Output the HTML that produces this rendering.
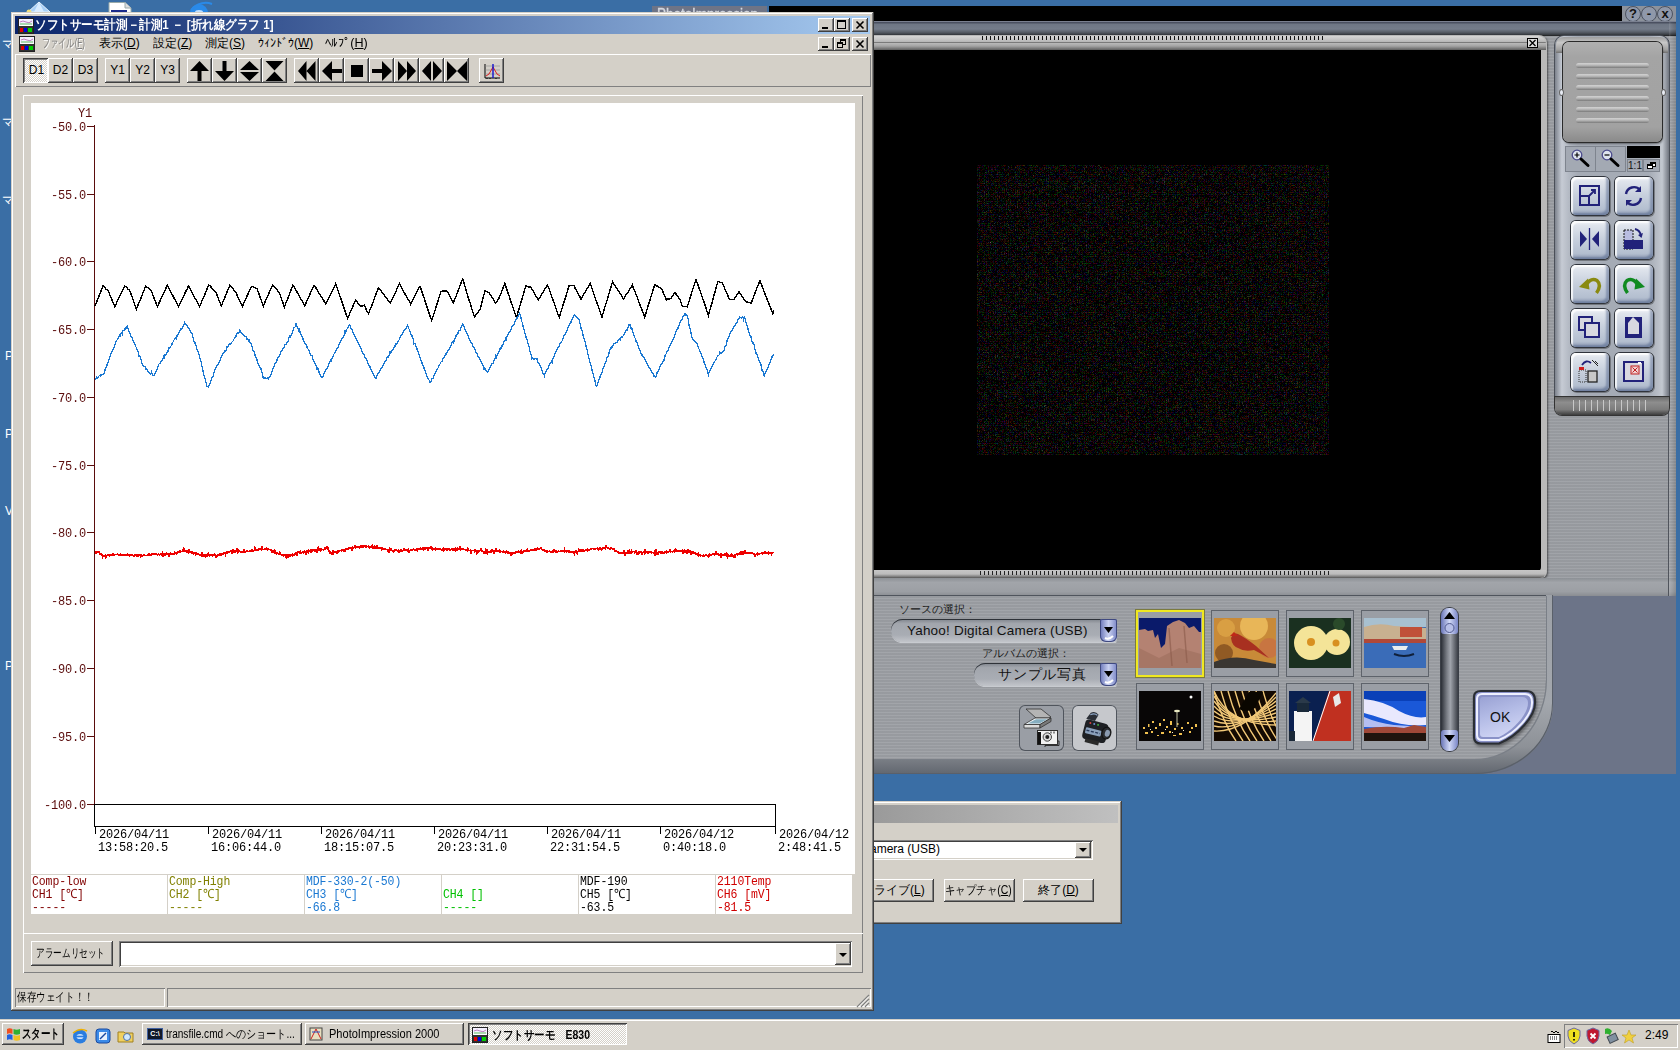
<!DOCTYPE html>
<html><head><meta charset="utf-8">
<style>
*{box-sizing:border-box;margin:0;padding:0}
html,body{width:1680px;height:1050px;overflow:hidden}
body{position:relative;background:#3A6EA5;font-family:"Liberation Sans",sans-serif;font-size:12px;color:#000}
.a{position:absolute}
.mono{font-family:"Liberation Mono",monospace}
/* classic 3D */
.raised{background:#D4D0C8;box-shadow:inset -1px -1px #404040,inset 1px 1px #D4D0C8,inset -2px -2px #808080,inset 2px 2px #FFFFFF}
.btn{background:#D4D0C8;box-shadow:inset -1px -1px #404040,inset 1px 1px #FFFFFF,inset -2px -2px #808080}
.sunken{box-shadow:inset 1px 1px #808080,inset -1px -1px #FFFFFF,inset 2px 2px #404040,inset -2px -2px #D4D0C8}
.thin-sunken{box-shadow:inset 1px 1px #808080,inset -1px -1px #FFFFFF}
.thin-raised{box-shadow:inset 1px 1px #FFFFFF,inset -1px -1px #808080}
.ax{font-size:12px;line-height:14px;white-space:nowrap;letter-spacing:-0.2px;transform:scaleY(1.12);transform-origin:0 50%}
.lg{font-size:11.5px;line-height:13px;white-space:nowrap;letter-spacing:-0.1px;transform:scaleY(1.1);transform-origin:0 50%}
.pic{width:16px;height:16px;border-radius:50%;background:#8f98aa;border:1px solid #4c5260;text-align:center;line-height:14px;font-size:13px;font-weight:bold;color:#111}
.etched{box-shadow:inset 1px 1px #808080,inset -1px -1px #FFFFFF,1px 1px #FFFFFF}
</style></head>
<body>

<!-- ========== Desktop fragments ========== -->
<div id="desk">
<svg class="a" style="left:24px;top:0" width="30" height="14"><path d="M15 2 L26 12 H4 Z" fill="#a8d0f8" stroke="#e8f4ff"/><path d="M15 2 L20 12 H10 Z" fill="#d8ecff"/><circle cx="5" cy="12" r="2.5" fill="#f0e080"/></svg>
<svg class="a" style="left:106px;top:0" width="30" height="14"><path d="M3 2.5 H19 L25 8 V14 H3 Z" fill="#fff" stroke="#9aa"/><path d="M19 2.5 V8 H25" fill="#ddd" stroke="#9aa"/><rect x="5" y="10" width="16" height="3" fill="#1a2a8a"/></svg>
<svg class="a" style="left:185px;top:0" width="32" height="14"><circle cx="14" cy="13" r="9" fill="#2a8ae8"/><path d="M6 10 Q16 0 27 4" stroke="#2a8ae8" stroke-width="2" fill="none"/><ellipse cx="14" cy="12" rx="4" ry="2" fill="#bfe0ff"/></svg>
<div class="a" style="left:2px;top:37px;color:#fff;font-size:12px;line-height:14px">マ</div>
<div class="a" style="left:2px;top:115px;color:#fff;font-size:12px;line-height:14px">マ</div>
<div class="a" style="left:2px;top:193px;color:#fff;font-size:12px;line-height:14px">マ</div>
<div class="a" style="left:5px;top:349px;color:#fff;font-size:12px;line-height:14px">P</div>
<div class="a" style="left:5px;top:427px;color:#fff;font-size:12px;line-height:14px">P</div>
<div class="a" style="left:5px;top:504px;color:#fff;font-size:12px;line-height:14px">V</div>
<div class="a" style="left:5px;top:659px;color:#fff;font-size:12px;line-height:14px">P</div>
</div>

<!-- ========== PhotoImpression window ========== -->
<div class="a" style="left:652px;top:6px;width:115px;height:10px;background:#6e7486;overflow:hidden"><div class="a" style="left:5px;top:1px;font-size:16px;color:#d4d8e0;white-space:nowrap;line-height:16px;transform:scaleX(0.84);transform-origin:0 0;-webkit-text-stroke:0.4px #d4d8e0">PhotoImpression</div></div>
<div class="a" style="left:650px;top:22px;width:1026px;height:574px;background:#9c9fa4;background-image:repeating-linear-gradient(180deg,rgba(255,255,255,0.05) 0 1px,rgba(0,0,0,0.035) 1px 3px)"></div>
<div class="a" style="left:769px;top:6px;width:853px;height:16px;background:#000;box-shadow:1px 1px #555"></div>
<div class="a" style="left:1622px;top:6px;width:54px;height:16px;background:#8c929c"></div>
<!-- title circle buttons -->
<div class="a pic" style="left:1625px;top:6px">?</div>
<div class="a pic" style="left:1641px;top:6px">-</div>
<div class="a pic" style="left:1657px;top:6px">x</div>
<!-- top strip -->
<div class="a" style="left:650px;top:21px;width:1026px;height:15px;background:linear-gradient(180deg,#7a8090 0,#7a8090 1px,#4a5060 1px,#4a5060 2px,#6e7684 3px,#747c8a 8px,#5a606a 11px,#33373c 14px,#1a1a1a 15px)"></div>
<!-- preview frame -->
<div class="a" style="left:650px;top:35px;width:897px;height:543px;background:#b9b9b9;border-radius:0 8px 6px 0;box-shadow:1px 1px 2px rgba(0,0,0,0.5)"></div>
<div class="a" style="left:650px;top:36px;width:896px;height:14px;background:linear-gradient(180deg,#d6d6d6 0,#c2c2c2 4px,#b4b4b4 6px,#7a7a7a 6px,#7a7a7a 7px,#bababa 7px,#a4a4a4 10px,#5e5e5e 14px);border-radius:0 8px 0 0"></div>
<div class="a" style="left:982px;top:36px;width:344px;height:4px;background:repeating-linear-gradient(90deg,#111 0 1.2px,transparent 1.2px 4px)"></div>
<div class="a" style="left:1527px;top:38px;width:11px;height:10px;border:1px solid #000;background:#ddd"><svg class="a" style="left:0;top:0" width="9" height="8"><path d="M1.5 1 L7.5 7 M7.5 1 L1.5 7" stroke="#000" stroke-width="1.3"/></svg></div>
<div class="a" style="left:650px;top:50px;width:891px;height:521px;background:#000;border-radius:0 0 4px 0"></div>
<div class="a" style="left:650px;top:570px;width:896px;height:8px;background:linear-gradient(180deg,#c6c6c6 0,#bcbcbc 50%,#7a7a7a 85%,#555 100%);border-radius:0 0 6px 0"></div>
<div class="a" style="left:980px;top:571px;width:349px;height:4px;background:repeating-linear-gradient(90deg,#222 0 1px,transparent 1px 4px)"></div>
<svg class="a" style="left:977px;top:165px" width="352" height="290"><filter id="nz" x="0" y="0" width="100%" height="100%"><feTurbulence type="turbulence" baseFrequency="0.55" numOctaves="1" seed="11"/><feColorMatrix values="0.16 0 0 0 -0.035  0 0.15 0 0 -0.035  0 0 0.15 0 -0.035  0 0 0 0 1"/></filter><rect width="352" height="290" fill="#000"/><rect width="352" height="290" filter="url(#nz)"/></svg>
<!-- gap strip -->
<div class="a" style="left:650px;top:578px;width:1026px;height:18px;background:linear-gradient(180deg,#8c9095 0,#a2a5aa 25%,#9c9fa4 75%,#8a8d92 100%)"></div>
<!-- right edge column -->
<div class="a" style="left:1668px;top:40px;width:1px;height:556px;background:#50545c"></div><div class="a" style="left:1669px;top:22px;width:7px;height:574px;background:linear-gradient(90deg,rgba(255,255,255,0.12),rgba(255,255,255,0) 40%,rgba(0,0,0,0.12))"></div>
<!-- right panel -->
<div class="a" style="left:1555px;top:36px;width:114px;height:368px;background:linear-gradient(90deg,#7d838d 0,#c6cbd4 6%,#b4bac4 12%,#a5abb5 20%,#a5abb5 82%,#b8bdc6 90%,#c3c8d0 94%,#70757f 100%);border-radius:9px 9px 0 0;box-shadow:0 0 0 1px #4a4f58"></div>
<div class="a" style="left:1556px;top:37px;width:112px;height:16px;background:linear-gradient(180deg,#9d9d9d 0,#c8c8c8 35%,#a0a0a0 80%,#707070 100%);border-radius:8px 8px 0 0"></div>
<div class="a" style="left:1563px;top:42px;width:99px;height:100px;background:linear-gradient(180deg,#b0b0b0 0,#a4a4a4 15%,#a2a2a2 85%,#8a8a8a 100%);border-radius:6px;box-shadow:0 0 0 1px #2a2a2a,1px 2px 2px rgba(0,0,0,0.4)"></div>
<div class="a" style="left:1576px;top:63px;width:73px;height:5px;border-radius:3px;background:linear-gradient(180deg,#d2d2d2 0,#bdbdbd 40%,#7a7a7a 100%)"></div>
<div class="a" style="left:1576px;top:74px;width:73px;height:5px;border-radius:3px;background:linear-gradient(180deg,#d2d2d2 0,#bdbdbd 40%,#7a7a7a 100%)"></div>
<div class="a" style="left:1576px;top:85px;width:73px;height:5px;border-radius:3px;background:linear-gradient(180deg,#d2d2d2 0,#bdbdbd 40%,#7a7a7a 100%)"></div>
<div class="a" style="left:1576px;top:96px;width:73px;height:5px;border-radius:3px;background:linear-gradient(180deg,#d2d2d2 0,#bdbdbd 40%,#7a7a7a 100%)"></div>
<div class="a" style="left:1576px;top:107px;width:73px;height:5px;border-radius:3px;background:linear-gradient(180deg,#d2d2d2 0,#bdbdbd 40%,#7a7a7a 100%)"></div>
<div class="a" style="left:1576px;top:118px;width:73px;height:5px;border-radius:3px;background:linear-gradient(180deg,#d2d2d2 0,#bdbdbd 40%,#7a7a7a 100%)"></div>
<div class="a" style="left:1559px;top:89px;width:5px;height:7px;border-radius:50%;background:#e8ecf4;border:1px solid #666"></div>
<div class="a" style="left:1661px;top:89px;width:5px;height:7px;border-radius:50%;background:#e8ecf4;border:1px solid #666"></div>
<div class="a" style="left:1565px;top:146px;width:61px;height:26px;background:#a3a9b3;box-shadow:inset 0 0 0 1px #7e848e"></div>
<div class="a" style="left:1595px;top:146px;width:1px;height:26px;background:#7e848e"></div>
<svg class="a" style="left:1571px;top:149px" width="22" height="21"><circle cx="6" cy="6" r="4.8" fill="#dde2ee" stroke="#4a4a8c" stroke-width="1.3"/><path d="M3.5 6 H8.5 M6 3.5 V8.5" stroke="#000" stroke-width="1.2"/><path d="M10 10 L17 16.5" stroke="#000" stroke-width="3" stroke-linecap="round"/></svg>
<svg class="a" style="left:1601px;top:149px" width="22" height="21"><circle cx="6" cy="6" r="4.8" fill="#dde2ee" stroke="#4a4a8c" stroke-width="1.3"/><path d="M3.5 6 H8.5" stroke="#000" stroke-width="1.2"/><path d="M10 10 L17 16.5" stroke="#000" stroke-width="3" stroke-linecap="round"/></svg>
<div class="a" style="left:1627px;top:146px;width:33px;height:12px;background:#000"></div>
<div class="a" style="left:1627px;top:159px;width:16px;height:13px;background:#a3a9b3;box-shadow:inset 0 0 0 1px #7e848e;font-size:10px;line-height:13px;text-align:center;color:#111">1:1</div>
<div class="a" style="left:1643px;top:159px;width:17px;height:13px;background:#a3a9b3;box-shadow:inset 0 0 0 1px #7e848e"><div class="a" style="left:7px;top:3px;width:6px;height:5px;border:1px solid #000;border-top-width:2px;background:#fff"></div><div class="a" style="left:4px;top:5px;width:6px;height:5px;border:1px solid #000;border-top-width:2px;background:#fff"></div></div>
<div class="a" style="left:1571px;top:177px;width:38px;height:38px;border-radius:5px;background:linear-gradient(180deg,#f2f4f8 0,#dfe4ec 12%,#c9d1de 45%,#b4bfd0 85%,#8f9cb4 100%);box-shadow:0 0 0 1px #30343c,1px 1px 0 1px rgba(0,0,0,0.3),inset -3px -2px 2px rgba(70,90,130,0.45),inset 2px 2px 1px rgba(255,255,255,0.8)"><svg class="a" style="left:0;top:0" width="38" height="38"><rect x="9" y="9" width="19" height="19" fill="none" stroke="#22227a" stroke-width="2"/><rect x="9" y="19" width="9" height="9" fill="none" stroke="#22227a" stroke-width="2"/><path d="M17 20 L24 13 M20 13 H24 V17" stroke="#22227a" stroke-width="1.8" fill="none"/></svg></div>
<div class="a" style="left:1615px;top:177px;width:38px;height:38px;border-radius:5px;background:linear-gradient(180deg,#f2f4f8 0,#dfe4ec 12%,#c9d1de 45%,#b4bfd0 85%,#8f9cb4 100%);box-shadow:0 0 0 1px #30343c,1px 1px 0 1px rgba(0,0,0,0.3),inset -3px -2px 2px rgba(70,90,130,0.45),inset 2px 2px 1px rgba(255,255,255,0.8)"><svg class="a" style="left:0;top:0" width="38" height="38"><path d="M11 17 A8 8 0 0 1 25 13" stroke="#22227a" stroke-width="2.4" fill="none"/><path d="M26 9 V15 H20 Z" fill="#22227a"/><path d="M26 21 A8 8 0 0 1 12 25" stroke="#22227a" stroke-width="2.4" fill="none"/><path d="M11 29 V23 H17 Z" fill="#22227a"/></svg></div>
<div class="a" style="left:1571px;top:221px;width:38px;height:38px;border-radius:5px;background:linear-gradient(180deg,#f2f4f8 0,#dfe4ec 12%,#c9d1de 45%,#b4bfd0 85%,#8f9cb4 100%);box-shadow:0 0 0 1px #30343c,1px 1px 0 1px rgba(0,0,0,0.3),inset -3px -2px 2px rgba(70,90,130,0.45),inset 2px 2px 1px rgba(255,255,255,0.8)"><svg class="a" style="left:0;top:0" width="38" height="38"><path d="M9 10 L16 18 L9 26 Z M28 10 L21 18 L28 26 Z" fill="#22227a"/><path d="M18.5 7 V29" stroke="#22227a" stroke-width="1.3"/></svg></div>
<div class="a" style="left:1615px;top:221px;width:38px;height:38px;border-radius:5px;background:linear-gradient(180deg,#f2f4f8 0,#dfe4ec 12%,#c9d1de 45%,#b4bfd0 85%,#8f9cb4 100%);box-shadow:0 0 0 1px #30343c,1px 1px 0 1px rgba(0,0,0,0.3),inset -3px -2px 2px rgba(70,90,130,0.45),inset 2px 2px 1px rgba(255,255,255,0.8)"><svg class="a" style="left:0;top:0" width="38" height="38"><rect x="9" y="9" width="9" height="19" fill="#b8bce0" stroke="#111" stroke-dasharray="2 1"/><rect x="9" y="19" width="19" height="9" fill="#22227a"/><path d="M20 8 Q25 9 26 15" stroke="#22227a" stroke-width="2" fill="none"/><path d="M23 14 L26.5 17 L28 12 Z" fill="#22227a"/></svg></div>
<div class="a" style="left:1571px;top:265px;width:38px;height:38px;border-radius:5px;background:linear-gradient(180deg,#f2f4f8 0,#dfe4ec 12%,#c9d1de 45%,#b4bfd0 85%,#8f9cb4 100%);box-shadow:0 0 0 1px #30343c,1px 1px 0 1px rgba(0,0,0,0.3),inset -3px -2px 2px rgba(70,90,130,0.45),inset 2px 2px 1px rgba(255,255,255,0.8)"><svg class="a" style="left:0;top:0" width="38" height="38"><path d="M15 20 Q20 12 26 15.5 Q31 20 25.5 28" stroke="#8a8a10" stroke-width="3.4" fill="none"/><path d="M8 22 L17 13.5 L18.5 24.5 Z" fill="#8a8a10"/></svg></div>
<div class="a" style="left:1615px;top:265px;width:38px;height:38px;border-radius:5px;background:linear-gradient(180deg,#f2f4f8 0,#dfe4ec 12%,#c9d1de 45%,#b4bfd0 85%,#8f9cb4 100%);box-shadow:0 0 0 1px #30343c,1px 1px 0 1px rgba(0,0,0,0.3),inset -3px -2px 2px rgba(70,90,130,0.45),inset 2px 2px 1px rgba(255,255,255,0.8)"><svg class="a" style="left:0;top:0" width="38" height="38"><path d="M23 20 Q18 12 12 15.5 Q7 20 12.5 28" stroke="#108a20" stroke-width="3.4" fill="none"/><path d="M30 22 L21 13.5 L19.5 24.5 Z" fill="#108a20"/></svg></div>
<div class="a" style="left:1571px;top:309px;width:38px;height:38px;border-radius:5px;background:linear-gradient(180deg,#f2f4f8 0,#dfe4ec 12%,#c9d1de 45%,#b4bfd0 85%,#8f9cb4 100%);box-shadow:0 0 0 1px #30343c,1px 1px 0 1px rgba(0,0,0,0.3),inset -3px -2px 2px rgba(70,90,130,0.45),inset 2px 2px 1px rgba(255,255,255,0.8)"><svg class="a" style="left:0;top:0" width="38" height="38"><rect x="8" y="8" width="13" height="13" fill="#d8d8e0" stroke="#22227a" stroke-width="2"/><rect x="14" y="14" width="14" height="14" fill="#d8d8e0" stroke="#22227a" stroke-width="2"/></svg></div>
<div class="a" style="left:1615px;top:309px;width:38px;height:38px;border-radius:5px;background:linear-gradient(180deg,#f2f4f8 0,#dfe4ec 12%,#c9d1de 45%,#b4bfd0 85%,#8f9cb4 100%);box-shadow:0 0 0 1px #30343c,1px 1px 0 1px rgba(0,0,0,0.3),inset -3px -2px 2px rgba(70,90,130,0.45),inset 2px 2px 1px rgba(255,255,255,0.8)"><svg class="a" style="left:0;top:0" width="38" height="38"><rect x="10" y="8" width="17" height="21" fill="#22227a"/><path d="M13 14 L18 8 L24 14 V25 H13 Z" fill="#d8d8e0"/></svg></div>
<div class="a" style="left:1571px;top:353px;width:38px;height:38px;border-radius:5px;background:linear-gradient(180deg,#f2f4f8 0,#dfe4ec 12%,#c9d1de 45%,#b4bfd0 85%,#8f9cb4 100%);box-shadow:0 0 0 1px #30343c,1px 1px 0 1px rgba(0,0,0,0.3),inset -3px -2px 2px rgba(70,90,130,0.45),inset 2px 2px 1px rgba(255,255,255,0.8)"><svg class="a" style="left:0;top:0" width="38" height="38"><path d="M11 12 Q15 6 20 10" stroke="#22227a" stroke-width="1.8" fill="none"/><rect x="8" y="17" width="7" height="12" fill="none" stroke="#333" stroke-dasharray="1 1"/><rect x="8" y="14" width="5" height="3" fill="#d02020"/><rect x="17" y="18" width="9" height="11" fill="#c8c8c8" stroke="#222" stroke-width="1.3"/><path d="M21 7 L27 13 M24 8 L27 11" stroke="#222"/></svg></div>
<div class="a" style="left:1615px;top:353px;width:38px;height:38px;border-radius:5px;background:linear-gradient(180deg,#f2f4f8 0,#dfe4ec 12%,#c9d1de 45%,#b4bfd0 85%,#8f9cb4 100%);box-shadow:0 0 0 1px #30343c,1px 1px 0 1px rgba(0,0,0,0.3),inset -3px -2px 2px rgba(70,90,130,0.45),inset 2px 2px 1px rgba(255,255,255,0.8)"><svg class="a" style="left:0;top:0" width="38" height="38"><rect x="9" y="9" width="19" height="19" fill="#d8d8e0" stroke="#22227a" stroke-width="2"/><rect x="16" y="13" width="8" height="8" fill="#f0d0d0" stroke="#c02020"/><path d="M17.5 14.5 L22.5 19.5 M22.5 14.5 L17.5 19.5" stroke="#c02020"/><rect x="23" y="9" width="3" height="2" fill="#fff"/></svg></div>
<div class="a" style="left:1555px;top:397px;width:114px;height:18px;border-radius:0 0 7px 7px;background:linear-gradient(180deg,#6a6a6a 0,#8e8e8e 30%,#7c7c7c 70%,#3c3c3c 100%);box-shadow:0 0 0 1px #333"></div>
<div class="a" style="left:1573px;top:400px;width:78px;height:11px;background:repeating-linear-gradient(90deg,#c8c8c8 0 1px,transparent 1px 6px)"></div>
<!-- slate -->
<div class="a" style="left:1380px;top:596px;width:296px;height:178px;background:#6c7488"></div>
<!-- bottom panel -->
<div class="a" style="left:650px;top:595px;width:903px;height:179px;background:linear-gradient(180deg,#9da1a7 0,#a3a7ad 60%,#8d9197 85%,#62676f 100%);border-bottom-right-radius:78px 70px;box-shadow:inset -1px -1px #5a606a"></div>
<div class="a" style="left:650px;top:595px;width:896px;height:164px;background:#9da0a5;background-image:repeating-linear-gradient(180deg,rgba(255,255,255,0.05) 0 1px,rgba(0,0,0,0.035) 1px 3px);border-bottom-right-radius:72px 80px;box-shadow:inset 0 1px #50555d,1px 1px #7a7f87"></div>
<div class="a pil" style="left:899px;top:602px;width:80px;overflow:hidden;font-size:11px;color:#1a1a1a;white-space:nowrap;line-height:14px">ソースの選択：</div>
<div class="a" style="left:891px;top:619px;width:226px;height:23px;border-radius:12px 3px 3px 12px;background:linear-gradient(180deg,#7e838b 0,#a2a6ad 20%,#a9adb4 70%,#c2c5ca 100%);box-shadow:inset 0 1px #2e3238,0 1px #c8cbd0"></div>
<div class="a" style="left:907px;top:620px;font-size:13.5px;color:#111;white-space:nowrap;line-height:21px;letter-spacing:0.2px">Yahoo! Digital Camera (USB)</div>
<div class="a" style="left:891px;top:663px;width:0;height:0"></div>
<div class="a pil" style="left:982px;top:646px;width:90px;overflow:hidden;font-size:11px;color:#1a1a1a;white-space:nowrap;line-height:14px">アルバムの選択：</div>
<div class="a" style="left:974px;top:663px;width:143px;height:23px;border-radius:12px 3px 3px 12px;background:linear-gradient(180deg,#7e838b 0,#a2a6ad 20%,#a9adb4 70%,#c2c5ca 100%);box-shadow:inset 0 1px #2e3238,0 1px #c8cbd0"></div>
<div class="a" style="left:998px;top:664px;width:100px;overflow:hidden;font-size:14px;color:#111;white-space:nowrap;line-height:21px;letter-spacing:0.8px">サンプル写真</div>
<div class="a" style="left:1100px;top:619px;width:17px;height:23px;border-radius:2px 2px 6px 6px;background:linear-gradient(90deg,#6a76b8 0,#c8d0f0 50%,#7a86c6 100%);box-shadow:inset 0 0 0 1px #404a80"><svg class="a" style="left:0;top:0" width="17" height="23"><path d="M4 8 H13 L8.5 14 Z" fill="#000"/><path d="M5 19 Q9 21 13 17" stroke="#fff" stroke-width="2" fill="none"/></svg></div>
<div class="a" style="left:1100px;top:663px;width:17px;height:23px;border-radius:2px 2px 6px 6px;background:linear-gradient(90deg,#6a76b8 0,#c8d0f0 50%,#7a86c6 100%);box-shadow:inset 0 0 0 1px #404a80"><svg class="a" style="left:0;top:0" width="17" height="23"><path d="M4 8 H13 L8.5 14 Z" fill="#000"/><path d="M5 19 Q9 21 13 17" stroke="#fff" stroke-width="2" fill="none"/></svg></div>
<div class="a" style="left:1019px;top:705px;width:45px;height:46px;border-radius:6px;background:#9a9ea5;box-shadow:inset 0 0 0 1px #50555d"><svg class="a" style="left:0;top:0" width="45" height="46"><path d="M7 4 H22 L32 12 L30 13 H17 Z" fill="#b4b4b4" stroke="#333" stroke-width="0.8"/><path d="M5 19.5 L16 13 H32 L21 19.5 Z" fill="#eef2f4" stroke="#333" stroke-width="0.8"/><path d="M9 18.5 L17 14.2 H28.5 L20.5 18.5 Z" fill="#86aec0"/><path d="M5 19.5 H21 V23 H5 Z" fill="#dcdcdc" stroke="#333" stroke-width="0.8"/><path d="M21 19.5 L32 13 V16.5 L21 23 Z" fill="#7a7a7a" stroke="#333" stroke-width="0.8"/><rect x="18.5" y="25.5" width="20" height="14" fill="#f2f2f2" stroke="#222" stroke-width="0.9"/><rect x="18.5" y="27" width="3.5" height="12.5" fill="#111"/><circle cx="28.3" cy="32" r="4.2" fill="#ddd" stroke="#333" stroke-width="0.9"/><circle cx="28.3" cy="32" r="2" fill="#222"/><rect x="31" y="26.5" width="2" height="2" fill="#888"/><rect x="34" y="26.5" width="2" height="2" fill="#888"/><path d="M39 36 H40 V40.5 H26 V42" stroke="#222" fill="none" stroke-width="0.9"/></svg></div>
<div class="a" style="left:1072px;top:705px;width:45px;height:46px;border-radius:6px;background:#c6c8cc;box-shadow:inset 0 0 0 1px #50555d"><svg class="a" style="left:0;top:0" width="45" height="46"><g transform="rotate(14 22 24)"><path d="M12 20 Q12 16 16 16 H31 Q36 16 36 21 V32 Q36 36 31 36 H16 Q12 36 12 32 Z" fill="#1e2024"/><rect x="14" y="24" width="16" height="6" rx="1" fill="#8aa0bc"/><path d="M15 27 H29" stroke="#2a3a5a" stroke-width="1.4" stroke-dasharray="3 1.5"/><circle cx="17" cy="19" r="1" fill="#d04040"/><circle cx="21" cy="19" r="1" fill="#6a90d0"/><circle cx="25" cy="19" r="1" fill="#40b040"/><ellipse cx="35" cy="25" rx="4.5" ry="6" fill="#2a2c30" stroke="#111"/><ellipse cx="36" cy="25" rx="2.5" ry="3.5" fill="#8a9ab0"/><path d="M12 16 L15 9 Q19 6 23 9 L21 16 Z" fill="#2a2e36"/><path d="M15 11 Q19 8 22 10" stroke="#90a8c8" stroke-width="1.2" fill="none"/><rect x="16" y="35" width="14" height="4" fill="#2a2a2a"/></g></svg></div>
<div class="a" style="left:1136px;top:610px;width:68px;height:67px;background:#9a9ea5;box-shadow:inset 0 0 0 2px #f0e820,0 0 0 1px #7a7a40"></div>
<svg class="a" style="left:1139px;top:618px" width="62" height="50"><rect width="62" height="50" fill="#0a1a6a"/><path d="M0 12 L6 11 L9 13 L14 12 L16 20 L19 16 L22 30 L26 26 L28 8 L34 4 L40 2 L46 5 L50 10 L55 8 L60 14 L62 14 V50 H0 Z" fill="#b48272"/><path d="M0 30 L20 40 L40 30 L62 36 V50 H0 Z" fill="#a07060" opacity="0.7"/><path d="M30 10 L33 48 M45 8 L48 45" stroke="#8a5a4a" stroke-width="1.5" opacity="0.6"/></svg>
<div class="a" style="left:1211px;top:610px;width:68px;height:67px;background:#9a9ea5;box-shadow:inset 0 0 0 1px #5e636b"></div>
<svg class="a" style="left:1214px;top:618px" width="62" height="50"><rect width="62" height="50" fill="#c88a38"/><circle cx="40" cy="8" r="14" fill="#f0c060" opacity="0.8"/><circle cx="12" cy="10" r="9" fill="#e0a848" opacity="0.7"/><circle cx="55" cy="30" r="10" fill="#c86848" opacity="0.6"/><circle cx="10" cy="35" r="9" fill="#6a3a18" opacity="0.6"/><path d="M17 20 Q20 14 24 16 Q32 20 42 28 L55 40 L40 32 Q30 34 24 30 Q18 28 17 20 Z" fill="#a83020"/><path d="M16 18 L20 14 L24 18 Z" fill="#c02818"/><path d="M0 44 Q20 36 40 42 L62 46 V50 H0 Z" fill="#3a3632"/></svg>
<div class="a" style="left:1286px;top:610px;width:68px;height:67px;background:#9a9ea5;box-shadow:inset 0 0 0 1px #5e636b"></div>
<svg class="a" style="left:1289px;top:618px" width="62" height="50"><rect width="62" height="50" fill="#1a3020"/><circle cx="22" cy="25" r="17" fill="#f4e498"/><circle cx="48" cy="24" r="13" fill="#f4e498"/><circle cx="22" cy="24" r="4" fill="#d89020"/><circle cx="47" cy="25" r="3.5" fill="#d89020"/><circle cx="50" cy="6" r="6" fill="#2a4a2a"/></svg>
<div class="a" style="left:1361px;top:610px;width:68px;height:67px;background:#9a9ea5;box-shadow:inset 0 0 0 1px #5e636b"></div>
<svg class="a" style="left:1364px;top:618px" width="62" height="50"><rect width="62" height="50" fill="#3a6ab0"/><rect width="62" height="9" fill="#a8c0d0"/><path d="M0 9 Q15 4 30 8 L62 10 V22 H0 Z" fill="#c8b090"/><rect x="36" y="9" width="22" height="10" fill="#c05038"/><rect x="0" y="21" width="62" height="4" fill="#b04838"/><rect x="0" y="25" width="62" height="25" fill="#3a6cb8"/><path d="M28 28 H44 L42 32 H30 Z" fill="#e8eef0"/><path d="M30 36 Q40 40 50 36" stroke="#10203a" stroke-width="2" fill="none"/></svg>
<div class="a" style="left:1136px;top:683px;width:68px;height:67px;background:#9a9ea5;box-shadow:inset 0 0 0 1px #5e636b"></div>
<svg class="a" style="left:1139px;top:691px" width="62" height="50"><rect width="62" height="50" fill="#080606"/><circle cx="52" cy="6" r="1.5" fill="#fff"/><g fill="#f0c050"><rect x="4" y="36" width="2" height="2"/><rect x="9" y="33" width="1.5" height="3"/><rect x="13" y="30" width="2" height="2"/><rect x="16" y="36" width="2" height="2"/><rect x="20" y="32" width="2" height="3"/><rect x="24" y="28" width="2" height="2"/><rect x="27" y="35" width="2" height="2"/><rect x="31" y="30" width="2" height="4"/><rect x="35" y="37" width="2" height="2"/><rect x="38" y="32" width="1.5" height="2"/><rect x="42" y="36" width="2" height="2"/><rect x="48" y="31" width="2" height="2"/><rect x="52" y="36" width="2" height="2"/><rect x="56" y="33" width="2" height="3"/><rect x="6" y="41" width="3" height="2"/><rect x="12" y="40" width="2" height="2"/><rect x="22" y="41" width="3" height="2"/><rect x="30" y="40" width="2" height="2"/><rect x="40" y="42" width="3" height="2"/><rect x="50" y="40" width="2" height="2"/><rect x="18" y="44" width="2" height="1"/><rect x="34" y="44" width="3" height="1"/></g><g fill="#fff4d0"><rect x="11" y="38" width="1" height="1"/><rect x="26" y="38" width="1" height="1"/><rect x="44" y="39" width="1" height="1"/><rect x="33" y="41" width="1" height="1"/></g><ellipse cx="38" cy="20" rx="3" ry="1.3" fill="#e8e8c0"/><path d="M38 21 V36" stroke="#c0c0a0"/></svg>
<div class="a" style="left:1211px;top:683px;width:68px;height:67px;background:#9a9ea5;box-shadow:inset 0 0 0 1px #5e636b"></div>
<svg class="a" style="left:1214px;top:691px" width="62" height="50"><rect width="62" height="50" fill="#140a02"/><g stroke="#f2c878" stroke-width="1.4" fill="none"><path d="M0 0 Q14 34 62 34"/><path d="M0 5 Q16 35 62 30"/><path d="M0 10 Q18 36 62 26"/><path d="M0 15 Q20 37 62 22"/><path d="M0 20 Q22 38 62 18"/><path d="M0 25 Q24 39 62 14"/><path d="M0 30 Q26 40 62 10"/><path d="M0 35 Q28 41 62 6"/><path d="M0 40 Q30 42 62 2"/><path d="M0 0 Q8 30 22 50"/><path d="M7 0 Q15 30 29 50"/><path d="M14 0 Q22 30 36 50"/><path d="M21 0 Q29 30 43 50"/><path d="M28 0 Q36 30 50 50"/><path d="M35 0 Q43 30 57 50"/><path d="M42 0 Q50 30 64 50"/><path d="M49 0 Q57 30 71 50"/></g><path d="M25 18 L35 1 H49 L41 17 Q33 23 25 18 Z" fill="#0a0600"/></svg>
<div class="a" style="left:1286px;top:683px;width:68px;height:67px;background:#9a9ea5;box-shadow:inset 0 0 0 1px #5e636b"></div>
<svg class="a" style="left:1289px;top:691px" width="62" height="50"><rect width="62" height="50" fill="#0a2050"/><path d="M40 0 H62 V50 H24 Z" fill="#c03020"/><path d="M41 0 L24 50" stroke="#fff" stroke-width="1"/><path d="M44 6 L50 2 L52 12 L46 16 Z" fill="#e8e8e8"/><rect x="5" y="20" width="18" height="30" fill="#f4f4f4"/><rect x="8" y="12" width="12" height="9" fill="#1a2a3a"/><path d="M6 12 L14 6 L22 12 Z" fill="#2a3a4a"/><rect x="0" y="40" width="6" height="10" fill="#1a2838"/></svg>
<div class="a" style="left:1361px;top:683px;width:68px;height:67px;background:#9a9ea5;box-shadow:inset 0 0 0 1px #5e636b"></div>
<svg class="a" style="left:1364px;top:691px" width="62" height="50"><rect width="62" height="50" fill="#1a58d8"/><rect y="0" width="62" height="10" fill="#0a40b8"/><path d="M0 8 Q20 10 35 20 Q50 28 62 26 V34 Q40 36 20 28 Q8 24 0 22 Z" fill="#f4f0ff" opacity="0.95"/><path d="M0 26 Q14 32 30 34 L62 36 V38 L0 36 Z" fill="#dcd8f8" opacity="0.8"/><path d="M0 38 Q20 34 40 37 L50 34 L62 36 V42 H0 Z" fill="#a04838"/><rect y="42" width="62" height="8" fill="#20140e"/></svg>
<div class="a" style="left:1441px;top:608px;width:17px;height:143px;border-radius:8px;background:linear-gradient(90deg,#2a2e36 0,#7a7e86 35%,#a0a4ac 55%,#3a3e46 100%);box-shadow:0 0 0 1px #3a3e46"></div>
<div class="a" style="left:1441px;top:608px;width:17px;height:26px;border-radius:8px 8px 3px 3px;background:linear-gradient(90deg,#6a76b8 0,#d0d8f6 50%,#7a86c6 100%)"><svg class="a" style="left:0;top:0" width="17" height="26"><path d="M3 11 H14 L8.5 4 Z" fill="#000"/><circle cx="8.5" cy="20" r="4.5" fill="#b8c0e8" stroke="#505a90"/></svg></div>
<div class="a" style="left:1441px;top:730px;width:17px;height:21px;border-radius:3px 3px 8px 8px;background:linear-gradient(90deg,#6a76b8 0,#d0d8f6 50%,#7a86c6 100%)"><svg class="a" style="left:0;top:0" width="17" height="21"><path d="M3 5 H14 L8.5 12 Z" fill="#000"/></svg></div>
<svg class="a" style="left:1466px;top:682px" width="76" height="72"><defs><linearGradient id="okg" x1="0" y1="0" x2="0.4" y2="1"><stop offset="0" stop-color="#9aa2d4"/><stop offset="0.5" stop-color="#b4bce6"/><stop offset="1" stop-color="#cfd4f4"/></linearGradient></defs><path d="M15 9 H60 Q69 9 69 19 V21 C69 34 52 54 33 61.5 H15 Q8 61.5 8 55 V15 Q8 9 15 9 Z" fill="#8a92c8" stroke="#2a2e34" stroke-width="2.2" filter="drop-shadow(1px 2px 1.5px rgba(0,0,0,0.4))"/><path d="M16 12 H59 Q66 12 66 20 V21 C66 33 50 51 33 58 H16 Q11 58 11 53 V17 Q11 12 16 12 Z" fill="none" stroke="#eef0ff" stroke-width="2"/><path d="M17 15 H56 Q62 15 62 21 C62 32 48 48 33 55 H17 Q14 55 14 52 V18 Q14 15 17 15 Z" fill="url(#okg)"/><text x="24" y="40" font-family="Liberation Sans" font-size="14" fill="#111">OK</text></svg>

<!-- ========== Dialog ========== -->
<div class="a raised" style="left:700px;top:801px;width:422px;height:123px;"></div>
<div class="a" style="left:704px;top:805px;width:414px;height:18px;background:linear-gradient(90deg,#808080,#C0C0C0)"></div>
<div class="a sunken" style="left:700px;top:840px;width:393px;height:20px;background:#fff"></div>
<div class="a" style="left:870px;top:841px;font-size:12px;line-height:17px;white-space:nowrap">amera (USB)</div>
<div class="a btn" style="left:1075px;top:842px;width:16px;height:16px"><svg class="a" style="left:0;top:0" width="16" height="16"><path d="M4 6 H12 L8 10 Z" fill="#000"/></svg></div>
<div class="a btn" style="left:800px;top:879px;width:134px;height:23px;box-shadow:inset -1px -1px #404040,inset 1px 1px #fff,inset -2px -2px #808080"></div>
<div class="a" style="left:874px;top:882px;font-size:12px;line-height:16px;white-space:nowrap">ライブ(<u>L</u>)</div>
<div class="a btn" style="left:944px;top:879px;width:71px;height:23px"></div>
<div class="a" style="left:945px;top:882px;font-size:12px;line-height:16px;white-space:nowrap;width:80px;overflow:hidden;transform:scaleX(0.87);transform-origin:0 0">キャプチャ(<u>C</u>)</div>
<div class="a btn" style="left:1023px;top:879px;width:71px;height:23px;text-align:center;line-height:23px;font-size:12px">終了(<u>D</u>)</div>

<!-- ========== Main window ========== -->
<div class="a raised" style="left:11px;top:12px;width:863px;height:999px;"></div>
<div class="a" style="left:15px;top:16px;width:855px;height:18px;background:linear-gradient(90deg,#0A246A,#A6CAF0)"></div>
<!-- title icon -->
<div class="a" style="left:18px;top:18px;width:16px;height:15px;"><svg width="16" height="16" viewBox="0 0 16 16"><rect x="0.5" y="0.5" width="15" height="15" fill="#fff" stroke="#222"/><rect x="1" y="1" width="14" height="6" fill="#f4f0ff"/><path d="M2 4 Q5 2 8 4 T14 3" stroke="#c080c0" fill="none"/><path d="M2 6 L14 6" stroke="#60c060"/><rect x="1" y="8" width="14" height="7" fill="#303030"/><rect x="2" y="10" width="3" height="4" fill="#e00000"/><rect x="6" y="10" width="3" height="4" fill="#0000e0"/><rect x="10" y="10" width="4" height="4" fill="#00d000"/></svg></div>
<div class="a" style="left:35px;top:17px;height:16px;line-height:16px;color:#fff;font-weight:bold;font-size:13px;white-space:nowrap;width:270px;overflow:hidden;transform:scaleX(0.89);transform-origin:0 0">ソフトサーモ計測－計測1 － [折れ線グラフ 1]</div>
<!-- title buttons -->
<div class="a btn" style="left:818px;top:18px;width:16px;height:14px"><div class="a" style="left:4px;top:9px;width:6px;height:2px;background:#000"></div></div>
<div class="a btn" style="left:834px;top:18px;width:16px;height:14px"><div class="a" style="left:3px;top:2px;width:9px;height:9px;border:1px solid #000;border-top-width:2px"></div></div>
<div class="a btn" style="left:852px;top:18px;width:16px;height:14px"><svg class="a" style="left:0;top:0" width="16" height="14"><path d="M4.5 3.5 L11.5 10.5 M11.5 3.5 L4.5 10.5" stroke="#000" stroke-width="1.6"/></svg></div>
<!-- menu bar -->
<div class="a" style="left:19px;top:36px;width:16px;height:16px;"><svg width="16" height="16" viewBox="0 0 16 16"><rect x="0.5" y="0.5" width="15" height="15" fill="#fff" stroke="#222"/><rect x="1" y="1" width="14" height="6" fill="#f4f0ff"/><path d="M2 4 Q5 2 8 4 T14 3" stroke="#c080c0" fill="none"/><path d="M2 6 L14 6" stroke="#60c060"/><rect x="1" y="8" width="14" height="7" fill="#303030"/><rect x="2" y="10" width="3" height="4" fill="#e00000"/><rect x="6" y="10" width="3" height="4" fill="#0000e0"/><rect x="10" y="10" width="4" height="4" fill="#00d000"/></svg></div>
<div class="a" style="left:42px;top:35px;height:17px;line-height:17px;white-space:nowrap;font-size:12px">
<span class="a" style="left:0;width:64px;overflow:hidden;color:#808080;text-shadow:1px 1px #fff;transform:scaleX(0.68);transform-origin:0 0">ファイル(<u>F</u>)</span>
<span class="a" style="left:57px;width:44px;overflow:hidden">表示(<u>D</u>)</span>
<span class="a" style="left:111px;width:44px;overflow:hidden">設定(<u>Z</u>)</span>
<span class="a" style="left:163px;width:44px;overflow:hidden">測定(<u>S</u>)</span>
<span class="a" style="left:216px;width:60px;overflow:hidden">ｳｨﾝﾄﾞｳ(<u>W</u>)</span>
<span class="a" style="left:283px;width:44px;overflow:hidden;transform:scaleX(1.05);transform-origin:0 0">ﾍﾙﾌﾟ(<u>H</u>)</span>
</div>
<div class="a btn" style="left:818px;top:37px;width:16px;height:14px"><div class="a" style="left:4px;top:9px;width:6px;height:2px;background:#000"></div></div>
<div class="a btn" style="left:834px;top:37px;width:16px;height:14px"><div class="a" style="left:6px;top:2px;width:6px;height:6px;border:1px solid #000;border-top-width:2px"></div><div class="a" style="left:3px;top:5px;width:6px;height:6px;border:1px solid #000;border-top-width:2px;background:#D4D0C8"></div></div>
<div class="a btn" style="left:852px;top:37px;width:16px;height:14px"><svg class="a" style="left:0;top:0" width="16" height="14"><path d="M4.5 3.5 L11.5 10.5 M11.5 3.5 L4.5 10.5" stroke="#000" stroke-width="1.6"/></svg></div>
<!-- toolbar -->
<div class="a" style="left:15px;top:54px;width:856px;height:33px;box-shadow:inset 1px 1px #fff,inset -1px -1px #808080"></div>
<div class="a" style="left:23px;top:58px;width:25px;height:25px;background-color:#EAE8E4;background-image:repeating-conic-gradient(#fff 0 25%,#D4D0C8 0 50%);background-size:2px 2px;box-shadow:inset 1px 1px #404040,inset -1px -1px #fff,inset 2px 2px #808080"><div class="a" style="left:1px;top:0;width:25px;height:25px;line-height:25px;text-align:center;font-size:12px">D1</div></div>
<div class="a" style="left:48px;top:58px;width:25px;height:25px;background:#D4D0C8;box-shadow:inset -1px -1px #404040,inset 1px 1px #fff,inset -2px -2px #808080"><div class="a" style="left:0px;top:0;width:25px;height:25px;line-height:25px;text-align:center;font-size:12px">D2</div></div>
<div class="a" style="left:73px;top:58px;width:25px;height:25px;background:#D4D0C8;box-shadow:inset -1px -1px #404040,inset 1px 1px #fff,inset -2px -2px #808080"><div class="a" style="left:0px;top:0;width:25px;height:25px;line-height:25px;text-align:center;font-size:12px">D3</div></div>
<div class="a" style="left:105px;top:58px;width:25px;height:25px;background:#D4D0C8;box-shadow:inset -1px -1px #404040,inset 1px 1px #fff,inset -2px -2px #808080"><div class="a" style="left:0px;top:0;width:25px;height:25px;line-height:25px;text-align:center;font-size:12px">Y1</div></div>
<div class="a" style="left:130px;top:58px;width:25px;height:25px;background:#D4D0C8;box-shadow:inset -1px -1px #404040,inset 1px 1px #fff,inset -2px -2px #808080"><div class="a" style="left:0px;top:0;width:25px;height:25px;line-height:25px;text-align:center;font-size:12px">Y2</div></div>
<div class="a" style="left:155px;top:58px;width:25px;height:25px;background:#D4D0C8;box-shadow:inset -1px -1px #404040,inset 1px 1px #fff,inset -2px -2px #808080"><div class="a" style="left:0px;top:0;width:25px;height:25px;line-height:25px;text-align:center;font-size:12px">Y3</div></div>
<div class="a" style="left:187px;top:58px;width:25px;height:25px;background:#D4D0C8;box-shadow:inset -1px -1px #404040,inset 1px 1px #fff,inset -2px -2px #808080"><svg class="a" style="left:0;top:0" width="25" height="25"><path d="M3 13 L12.5 3 L22 13 Z M10.5 13 H14.5 V23 H10.5 Z" fill="#000"/></svg></div>
<div class="a" style="left:212px;top:58px;width:25px;height:25px;background:#D4D0C8;box-shadow:inset -1px -1px #404040,inset 1px 1px #fff,inset -2px -2px #808080"><svg class="a" style="left:0;top:0" width="25" height="25"><path d="M3 13 L22 13 L12.5 23 Z M10.5 3 H14.5 V13 H10.5 Z" fill="#000"/></svg></div>
<div class="a" style="left:237px;top:58px;width:25px;height:25px;background:#D4D0C8;box-shadow:inset -1px -1px #404040,inset 1px 1px #fff,inset -2px -2px #808080"><svg class="a" style="left:0;top:0" width="25" height="25"><path d="M3 12 L12.5 3 L22 12 Z M3 14 L22 14 L12.5 23 Z" fill="#000"/></svg></div>
<div class="a" style="left:262px;top:58px;width:25px;height:25px;background:#D4D0C8;box-shadow:inset -1px -1px #404040,inset 1px 1px #fff,inset -2px -2px #808080"><svg class="a" style="left:0;top:0" width="25" height="25"><path d="M3.5 3 L21.5 3 L12.5 12.5 Z M12.5 13.5 L3.5 23 L21.5 23 Z" fill="#000"/></svg></div>
<div class="a" style="left:294px;top:58px;width:25px;height:25px;background:#D4D0C8;box-shadow:inset -1px -1px #404040,inset 1px 1px #fff,inset -2px -2px #808080"><svg class="a" style="left:0;top:0" width="25" height="25"><path d="M4 13 L12.5 3 V23 Z M12.5 13 L21.5 3 V23 Z" fill="#000"/></svg></div>
<div class="a" style="left:319px;top:58px;width:25px;height:25px;background:#D4D0C8;box-shadow:inset -1px -1px #404040,inset 1px 1px #fff,inset -2px -2px #808080"><svg class="a" style="left:0;top:0" width="25" height="25"><path d="M3 13 L13 3 V23 Z M13 11 H23 V15 H13 Z" fill="#000"/></svg></div>
<div class="a" style="left:344px;top:58px;width:25px;height:25px;background:#D4D0C8;box-shadow:inset -1px -1px #404040,inset 1px 1px #fff,inset -2px -2px #808080"><svg class="a" style="left:0;top:0" width="25" height="25"><path d="M7 7 H19 V19 H7 Z" fill="#000"/></svg></div>
<div class="a" style="left:369px;top:58px;width:25px;height:25px;background:#D4D0C8;box-shadow:inset -1px -1px #404040,inset 1px 1px #fff,inset -2px -2px #808080"><svg class="a" style="left:0;top:0" width="25" height="25"><path d="M3 11 H13 V15 H3 Z M13 3 L23 13 L13 23 Z" fill="#000"/></svg></div>
<div class="a" style="left:394px;top:58px;width:25px;height:25px;background:#D4D0C8;box-shadow:inset -1px -1px #404040,inset 1px 1px #fff,inset -2px -2px #808080"><svg class="a" style="left:0;top:0" width="25" height="25"><path d="M4 3 L13 13 L4 23 Z M13 3 L22 13 L13 23 Z" fill="#000"/></svg></div>
<div class="a" style="left:419px;top:58px;width:25px;height:25px;background:#D4D0C8;box-shadow:inset -1px -1px #404040,inset 1px 1px #fff,inset -2px -2px #808080"><svg class="a" style="left:0;top:0" width="25" height="25"><path d="M3 13 L12 3 V23 Z M14 3 L23 13 L14 23 Z" fill="#000"/></svg></div>
<div class="a" style="left:444px;top:58px;width:25px;height:25px;background:#D4D0C8;box-shadow:inset -1px -1px #404040,inset 1px 1px #fff,inset -2px -2px #808080"><svg class="a" style="left:0;top:0" width="25" height="25"><path d="M3 3 L13 13 L3 23 Z M23 3 L13 13 L23 23 Z" fill="#000"/></svg></div>
<div class="a" style="left:479px;top:58px;width:25px;height:25px;background:#D4D0C8;box-shadow:inset -1px -1px #404040,inset 1px 1px #fff,inset -2px -2px #808080"><svg class="a" style="left:0;top:0" width="25" height="25"><path d="M6 6 V20 H21" stroke="#000" fill="none"/><path d="M6 8 H21 M6 12 H21 M6 16 H21" stroke="#888" stroke-width="0.6"/><path d="M7 18 L10 16 L14 9 L18 16 L21 18" stroke="#e02020" fill="none"/><path d="M14 6 V20" stroke="#1010d0" stroke-width="1.4"/><path d="M8 20 V21 M11 20 V21 M17 20 V21" stroke="#000"/></svg></div>
<!-- chart panel -->
<div class="a" style="left:23px;top:95px;width:840px;height:839px;box-shadow:inset 1px 1px #fff,inset -1px -1px #808080"></div>
<div class="a" style="left:31px;top:103px;width:824px;height:771px;background:#fff"></div>
<div class="a" style="left:31px;top:875px;width:136px;height:39px;background:#fff"></div>
<div class="a mono lg" style="left:32px;top:875px;color:#800000">Comp-low</div>
<div class="a mono lg" style="left:32px;top:888px;color:#800000">CH1 [℃]</div>
<div class="a mono lg" style="left:32px;top:901px;color:#800000">-----</div>
<div class="a" style="left:168px;top:875px;width:136px;height:39px;background:#fff"></div>
<div class="a mono lg" style="left:169px;top:875px;color:#808000">Comp-High</div>
<div class="a mono lg" style="left:169px;top:888px;color:#808000">CH2 [℃]</div>
<div class="a mono lg" style="left:169px;top:901px;color:#808000">-----</div>
<div class="a" style="left:305px;top:875px;width:136px;height:39px;background:#fff"></div>
<div class="a mono lg" style="left:306px;top:875px;color:#1a78d2">MDF-330-2(-50)</div>
<div class="a mono lg" style="left:306px;top:888px;color:#1a78d2">CH3 [℃]</div>
<div class="a mono lg" style="left:306px;top:901px;color:#1a78d2">-66.8</div>
<div class="a" style="left:442px;top:875px;width:136px;height:39px;background:#fff"></div>
<div class="a mono lg" style="left:443px;top:888px;color:#00c000">CH4 []</div>
<div class="a mono lg" style="left:443px;top:901px;color:#00c000">-----</div>
<div class="a" style="left:579px;top:875px;width:136px;height:39px;background:#fff"></div>
<div class="a mono lg" style="left:580px;top:875px;color:#000000">MDF-190</div>
<div class="a mono lg" style="left:580px;top:888px;color:#000000">CH5 [℃]</div>
<div class="a mono lg" style="left:580px;top:901px;color:#000000">-63.5</div>
<div class="a" style="left:716px;top:875px;width:136px;height:39px;background:#fff"></div>
<div class="a mono lg" style="left:717px;top:875px;color:#d00000">2110Temp</div>
<div class="a mono lg" style="left:717px;top:888px;color:#d00000">CH6 [mV]</div>
<div class="a mono lg" style="left:717px;top:901px;color:#d00000">-81.5</div>
<svg class="a" style="left:0;top:0" width="1680" height="1050" shape-rendering="crispEdges">
<path d="M94.5 125 V804" stroke="#5a0c0c" stroke-width="1"/>
<path d="M87 126.5 H94" stroke="#5a0c0c" stroke-width="1"/>
<path d="M87 194.5 H94" stroke="#5a0c0c" stroke-width="1"/>
<path d="M87 261.5 H94" stroke="#5a0c0c" stroke-width="1"/>
<path d="M87 329.5 H94" stroke="#5a0c0c" stroke-width="1"/>
<path d="M87 397.5 H94" stroke="#5a0c0c" stroke-width="1"/>
<path d="M87 465.5 H94" stroke="#5a0c0c" stroke-width="1"/>
<path d="M87 532.5 H94" stroke="#5a0c0c" stroke-width="1"/>
<path d="M87 600.5 H94" stroke="#5a0c0c" stroke-width="1"/>
<path d="M87 668.5 H94" stroke="#5a0c0c" stroke-width="1"/>
<path d="M87 736.5 H94" stroke="#5a0c0c" stroke-width="1"/>
<path d="M87 804.5 H94" stroke="#5a0c0c" stroke-width="1"/>
<path d="M94.5 804.5 H775.5 V826.5 H94.5 Z" stroke="#000" fill="none" stroke-width="1"/>
<path d="M95.5 826 V834" stroke="#000" stroke-width="1"/>
<path d="M208.5 826 V834" stroke="#000" stroke-width="1"/>
<path d="M321.5 826 V834" stroke="#000" stroke-width="1"/>
<path d="M434.5 826 V834" stroke="#000" stroke-width="1"/>
<path d="M547.5 826 V834" stroke="#000" stroke-width="1"/>
<path d="M660.5 826 V834" stroke="#000" stroke-width="1"/>
<path d="M775.5 826 V834" stroke="#000" stroke-width="1"/>
</svg>
<div class="a mono ax" style="left:51px;top:121px;width:35px;color:#5a0c0c">-50.0</div>
<div class="a mono ax" style="left:51px;top:189px;width:35px;color:#5a0c0c">-55.0</div>
<div class="a mono ax" style="left:51px;top:256px;width:35px;color:#5a0c0c">-60.0</div>
<div class="a mono ax" style="left:51px;top:324px;width:35px;color:#5a0c0c">-65.0</div>
<div class="a mono ax" style="left:51px;top:392px;width:35px;color:#5a0c0c">-70.0</div>
<div class="a mono ax" style="left:51px;top:460px;width:35px;color:#5a0c0c">-75.0</div>
<div class="a mono ax" style="left:51px;top:527px;width:35px;color:#5a0c0c">-80.0</div>
<div class="a mono ax" style="left:51px;top:595px;width:35px;color:#5a0c0c">-85.0</div>
<div class="a mono ax" style="left:51px;top:663px;width:35px;color:#5a0c0c">-90.0</div>
<div class="a mono ax" style="left:51px;top:731px;width:35px;color:#5a0c0c">-95.0</div>
<div class="a mono ax" style="left:44px;top:799px;width:42px;color:#5a0c0c">-100.0</div>
<div class="a mono ax" style="left:99px;top:828px;color:#000">2026/04/11</div>
<div class="a mono ax" style="left:98px;top:841px;color:#000">13:58:20.5</div>
<div class="a mono ax" style="left:212px;top:828px;color:#000">2026/04/11</div>
<div class="a mono ax" style="left:211px;top:841px;color:#000">16:06:44.0</div>
<div class="a mono ax" style="left:325px;top:828px;color:#000">2026/04/11</div>
<div class="a mono ax" style="left:324px;top:841px;color:#000">18:15:07.5</div>
<div class="a mono ax" style="left:438px;top:828px;color:#000">2026/04/11</div>
<div class="a mono ax" style="left:437px;top:841px;color:#000">20:23:31.0</div>
<div class="a mono ax" style="left:551px;top:828px;color:#000">2026/04/11</div>
<div class="a mono ax" style="left:550px;top:841px;color:#000">22:31:54.5</div>
<div class="a mono ax" style="left:664px;top:828px;color:#000">2026/04/12</div>
<div class="a mono ax" style="left:663px;top:841px;color:#000">0:40:18.0</div>
<div class="a mono ax" style="left:779px;top:828px;color:#000">2026/04/12</div>
<div class="a mono ax" style="left:778px;top:841px;color:#000">2:48:41.5</div>
<div class="a mono ax" style="left:78px;top:107px;color:#5a0c0c">Y1</div>
<!-- alarm panel -->
<div class="a" style="left:23px;top:933px;width:840px;height:40px;box-shadow:inset 1px 1px #fff,inset -1px -1px #808080"></div>
<div class="a btn" style="left:31px;top:941px;width:82px;height:25px"></div><div class="a" style="left:36px;top:945px;line-height:16px;font-size:12px;white-space:nowrap;width:100px;overflow:hidden;transform:scaleX(0.72);transform-origin:0 0">アラームリセット</div>
<div class="a sunken" style="left:119px;top:941px;width:733px;height:26px;background:#fff"></div>
<div class="a btn" style="left:835px;top:943px;width:16px;height:22px"><svg class="a" style="left:0;top:0" width="16" height="22"><path d="M4 10 L12 10 L8 14 Z" fill="#000"/></svg></div>
<!-- status bar -->
<div class="a thin-sunken" style="left:15px;top:988px;width:150px;height:19px"></div>
<div class="a" style="left:17px;top:989px;height:17px;line-height:17px;font-size:12px;white-space:nowrap;width:180px;overflow:hidden;transform:scaleX(0.8);transform-origin:0 0">保存ウェイト！！</div>
<div class="a thin-sunken" style="left:167px;top:988px;width:704px;height:19px"></div>
<svg class="a" style="left:856px;top:994px" width="14" height="14"><path d="M13 1 L1 13 M13 5 L5 13 M13 9 L9 13" stroke="#808080" stroke-width="1.3"/><path d="M13 2.5 L2.5 13 M13 6.5 L6.5 13 M13 10.5 L10.5 13" stroke="#fff" stroke-width="1"/></svg>

<!-- chart svg -->
<svg class="a" style="left:0;top:0" width="1680" height="1050">
  <polyline fill="none" stroke="#000" stroke-width="1.4" shape-rendering="crispEdges" points="95.0,305.8 96.6,302.0 98.2,297.9 99.8,294.1 101.4,290.1 103.0,285.7 104.4,287.1 105.8,289.1 107.2,290.1 108.6,291.5 110.1,295.7 111.7,299.1 113.2,303.0 114.8,306.5 116.2,303.7 117.6,300.4 119.0,297.8 120.5,295.0 121.9,291.9 123.3,289.1 124.7,286.1 126.3,287.2 128.0,289.1 129.6,290.5 131.0,294.0 132.3,297.6 133.7,301.8 135.0,305.3 136.4,309.1 137.9,305.4 139.5,301.5 141.1,297.8 142.6,293.6 144.1,290.0 145.7,286.0 147.4,287.5 149.0,288.8 150.7,289.6 152.1,292.9 153.4,296.3 154.8,300.1 156.1,303.1 157.5,306.6 158.9,303.3 160.3,300.3 161.7,297.2 163.2,294.1 164.6,291.1 166.0,288.0 167.4,285.1 169.0,288.1 170.6,291.3 172.2,294.4 173.7,297.5 175.3,300.4 176.9,303.2 178.5,306.7 179.9,303.9 181.4,300.9 182.8,297.8 184.2,294.9 185.6,291.7 187.1,289.1 188.5,286.0 190.1,288.8 191.7,291.6 193.3,295.0 194.8,298.0 196.4,300.4 198.0,303.8 199.6,306.4 201.2,302.7 202.7,299.2 204.2,295.9 205.8,292.3 207.3,288.2 208.9,285.0 210.4,286.2 211.9,288.2 213.3,289.6 214.8,291.5 216.3,293.2 218.0,297.3 219.6,301.9 221.3,305.9 222.8,302.2 224.2,299.0 225.7,295.2 227.1,291.8 228.6,288.4 230.0,285.0 231.5,286.7 233.1,288.6 234.6,291.1 236.1,292.8 237.7,296.6 239.2,299.9 240.8,303.0 242.3,306.5 243.9,303.1 245.4,299.8 246.9,296.3 248.5,292.9 250.1,289.5 251.6,286.3 253.0,286.8 254.4,287.6 255.8,288.5 257.2,289.0 258.8,293.3 260.3,297.9 261.8,301.8 263.4,306.0 264.9,302.2 266.5,298.9 268.0,295.5 269.6,291.6 271.1,288.5 272.7,285.0 274.1,286.2 275.4,288.2 276.8,289.7 278.1,291.4 279.5,292.8 281.1,297.8 282.8,302.6 284.4,306.9 285.8,303.2 287.3,299.9 288.7,296.3 290.1,292.2 291.6,288.6 293.0,285.0 294.5,287.4 295.9,290.1 297.4,292.7 298.9,295.4 300.4,298.1 301.9,300.6 303.3,303.3 304.8,306.2 306.3,302.2 307.9,299.0 309.4,295.6 310.9,291.8 312.5,288.3 314.0,285.1 315.5,287.1 316.9,289.5 318.4,292.0 319.9,294.6 321.4,296.6 322.9,299.1 324.3,301.5 325.8,304.2 327.2,301.0 328.6,298.4 330.0,295.1 331.5,292.2 332.9,289.5 334.3,286.7 335.7,283.6 337.2,287.8 338.6,292.0 340.1,296.6 341.6,300.8 343.1,305.5 344.6,309.8 346.0,313.8 347.5,318.2 349.1,314.9 350.7,311.2 352.3,307.7 353.9,303.8 355.5,300.1 356.9,301.7 358.2,303.6 359.6,304.8 361.0,306.4 362.6,305.9 364.2,305.3 365.6,308.1 367.1,311.4 368.5,313.8 369.9,309.9 371.4,306.6 372.8,302.8 374.2,299.0 375.6,294.9 377.1,291.4 378.5,287.6 380.0,289.1 381.4,291.5 382.9,293.5 384.4,295.4 385.8,297.4 387.3,299.2 388.7,301.3 390.2,303.2 391.8,299.8 393.3,296.9 394.9,293.4 396.4,290.4 397.9,286.6 399.5,283.8 401.1,286.6 402.7,289.7 404.3,292.6 405.8,295.5 407.4,298.2 409.0,300.8 410.6,304.1 412.2,300.8 413.7,297.9 415.3,295.1 416.9,292.0 418.4,288.9 420.0,286.3 421.5,290.4 422.9,294.6 424.4,298.9 425.9,303.6 427.3,307.7 428.8,312.3 430.2,316.4 431.7,320.6 433.2,315.9 434.8,311.1 436.4,305.7 437.9,301.1 439.4,296.2 441.0,291.2 442.6,291.2 444.1,290.7 445.6,291.1 447.2,291.2 448.8,293.7 450.3,296.8 451.8,299.7 453.4,302.8 454.9,298.8 456.5,295.0 458.0,291.2 459.6,286.8 461.1,282.9 462.7,279.1 464.2,283.8 465.6,288.5 467.1,293.7 468.5,298.4 470.0,302.6 471.5,307.6 472.9,312.2 474.4,316.9 475.8,315.1 477.2,313.4 478.6,311.5 480.0,309.5 481.7,303.2 483.3,297.1 485.0,290.8 486.9,291.7 488.7,292.4 490.1,294.3 491.4,296.2 492.8,298.4 494.1,300.6 495.5,302.9 497.1,301.1 498.6,298.9 500.2,295.3 501.7,291.4 503.2,287.4 504.8,283.5 506.3,287.9 507.7,292.2 509.2,296.3 510.6,300.8 512.1,304.9 513.6,309.0 515.0,313.5 516.5,317.8 518.0,312.2 519.6,307.1 521.1,301.8 522.7,296.8 524.2,291.5 525.8,285.9 527.5,286.7 529.1,287.0 530.8,287.2 532.3,289.8 533.8,292.0 535.2,294.9 536.7,297.3 538.2,299.9 539.8,297.4 541.3,294.9 542.9,292.4 544.4,289.9 546.0,287.1 547.5,285.0 549.0,288.7 550.5,292.9 551.9,297.4 553.4,301.0 554.9,305.2 556.3,309.3 557.8,313.8 559.3,317.5 560.7,312.7 562.1,308.5 563.5,303.4 565.0,299.2 566.4,294.4 567.8,289.8 569.2,285.2 570.8,285.3 572.4,285.8 574.0,285.7 575.4,288.8 576.8,291.2 578.2,293.9 579.6,296.2 581.0,299.1 582.5,296.7 584.1,293.6 585.6,291.2 587.1,288.8 588.7,286.4 590.2,283.4 591.7,287.6 593.2,291.8 594.6,296.2 596.1,300.5 597.6,304.4 599.0,308.6 600.5,312.8 602.0,316.9 603.5,311.9 605.0,306.7 606.5,301.9 608.0,297.2 609.5,291.8 611.0,287.0 612.5,281.6 614.1,284.4 615.7,286.9 617.3,289.3 618.9,291.6 620.5,294.1 622.1,296.6 623.7,299.2 625.1,296.4 626.6,294.1 628.0,292.1 629.4,289.8 630.9,287.3 632.3,284.9 633.8,289.0 635.4,292.7 637.0,296.8 638.5,300.8 640.0,305.0 641.6,308.9 643.2,312.8 644.7,317.1 646.1,312.7 647.5,307.7 648.9,303.4 650.4,298.6 651.8,294.3 653.2,289.5 654.6,284.8 656.0,285.5 657.3,286.1 658.7,287.1 660.0,287.8 661.4,288.4 663.1,292.2 664.7,295.9 666.4,299.9 667.8,299.1 669.3,299.2 670.7,298.5 672.1,296.5 673.6,294.3 675.0,292.5 676.7,295.0 678.3,297.3 680.0,299.7 681.2,303.2 682.5,306.7 684.1,306.4 685.8,306.6 687.4,306.8 688.8,301.9 690.3,297.3 691.7,292.7 693.1,288.5 694.6,283.9 696.0,279.6 697.6,284.0 699.1,288.1 700.7,292.6 702.2,297.1 703.8,301.5 705.4,306.3 706.9,310.9 708.5,315.4 710.0,309.5 711.6,304.3 713.1,298.4 714.7,292.9 716.2,287.5 717.8,281.6 719.2,281.8 720.7,282.4 722.1,282.3 723.6,285.8 725.1,289.4 726.5,292.9 728.0,295.9 729.5,299.6 731.0,299.7 732.4,299.7 733.9,299.5 735.5,297.1 737.2,294.6 738.8,291.6 740.2,293.7 741.5,295.4 742.9,297.5 744.2,299.7 745.6,301.4 747.0,302.1 748.4,302.4 749.8,302.3 751.2,303.1 752.7,299.0 754.1,295.5 755.5,291.8 757.0,287.8 758.5,284.3 759.9,280.6 761.3,284.4 762.8,287.8 764.2,291.8 765.7,295.7 767.1,299.2 768.6,302.9 770.0,306.3 771.5,310.3 772.9,313.9 773.5,310.2"/>
  <polyline fill="none" stroke="#1a78d2" stroke-width="1.3" shape-rendering="crispEdges" points="95.0,379.5 95.8,378.8 96.6,377.1 97.4,377.8 98.1,377.2 98.8,376.4 99.5,375.3 100.2,375.1 100.8,376.0 101.5,375.6 102.2,374.3 102.9,374.8 103.6,374.8 104.3,372.3 105.0,370.1 105.7,368.1 106.5,367.1 107.2,364.4 107.9,363.2 108.6,361.2 109.3,358.7 109.9,357.2 110.6,354.6 111.3,352.3 112.0,351.9 112.6,350.3 113.3,349.0 114.0,347.2 114.7,346.0 115.3,343.4 116.0,341.7 116.7,340.8 117.4,339.0 118.1,338.5 118.8,337.0 119.5,334.9 120.2,336.0 120.9,333.5 121.6,332.8 122.3,334.2 123.0,330.3 123.7,330.4 124.4,330.2 125.1,328.0 125.8,329.0 126.5,327.1 127.2,326.3 127.9,328.4 128.7,330.2 129.4,333.2 130.2,333.8 130.9,336.4 131.6,336.2 132.3,338.8 132.9,340.4 133.6,341.9 134.3,342.3 135.0,344.3 135.6,346.6 136.3,347.2 137.0,349.3 137.7,351.1 138.4,353.0 139.1,356.5 139.9,356.6 140.6,358.5 141.3,360.2 142.0,363.8 142.7,364.8 143.3,365.5 144.0,366.2 144.7,366.5 145.4,366.8 146.0,369.1 146.7,368.9 147.4,370.7 148.1,371.6 148.7,372.2 149.4,372.3 150.1,374.1 150.8,374.5 151.5,372.2 152.3,374.8 153.0,375.3 153.7,375.3 154.4,375.2 155.1,373.5 155.8,371.5 156.5,370.7 157.2,368.7 157.9,367.1 158.6,364.8 159.3,363.4 160.0,363.7 160.7,362.6 161.4,360.8 162.2,360.3 162.9,358.9 163.6,356.3 164.3,357.2 165.0,354.6 165.6,355.1 166.3,353.4 167.0,352.8 167.7,350.5 168.3,350.9 169.0,348.0 169.7,348.5 170.4,346.4 171.0,346.0 171.7,345.1 172.4,342.8 173.1,341.9 173.8,340.3 174.5,339.3 175.1,338.8 175.8,337.8 176.5,339.0 177.2,334.7 177.9,335.0 178.6,333.3 179.3,332.0 179.9,330.5 180.6,328.7 181.3,329.1 182.0,328.6 182.7,327.5 183.3,326.3 184.0,324.6 184.7,322.6 185.4,323.9 186.1,324.4 186.8,325.4 187.5,326.4 188.2,327.7 188.9,328.6 189.6,329.0 190.3,331.6 191.0,333.0 191.8,332.2 192.5,336.6 193.2,337.7 193.9,341.1 194.7,341.8 195.4,344.7 196.1,345.5 196.8,349.3 197.6,350.2 198.3,351.7 199.0,354.5 199.7,357.5 200.4,359.5 201.2,362.3 201.9,366.3 202.6,368.7 203.3,372.2 204.0,375.4 204.7,377.2 205.4,379.7 206.2,383.0 206.9,386.7 207.6,386.7 208.3,387.0 209.0,385.6 209.7,384.1 210.4,382.3 211.0,380.2 211.7,378.4 212.4,377.2 213.1,375.9 213.8,373.4 214.5,371.4 215.2,369.4 215.8,367.7 216.5,366.0 217.2,364.7 217.9,365.0 218.6,363.3 219.3,361.6 219.9,360.5 220.6,358.6 221.3,357.1 222.0,355.8 222.8,353.9 223.5,353.6 224.2,351.9 224.9,351.0 225.7,350.9 226.4,349.1 227.1,346.3 227.8,347.0 228.6,345.5 229.3,343.6 230.0,344.4 230.7,343.8 231.4,343.0 232.1,341.8 232.8,341.3 233.5,340.1 234.2,338.6 234.9,337.7 235.6,336.1 236.3,336.4 237.0,333.7 237.7,333.1 238.4,333.0 239.1,332.5 239.8,330.4 240.5,332.3 241.2,333.1 241.9,333.5 242.7,333.9 243.4,334.4 244.1,335.9 244.8,336.3 245.5,336.5 246.2,337.0 246.9,339.4 247.7,338.7 248.4,340.9 249.1,340.0 249.8,342.0 250.5,342.5 251.2,344.3 251.9,346.2 252.6,349.4 253.3,351.0 254.0,351.8 254.7,352.8 255.3,356.4 256.0,357.9 256.7,359.2 257.4,361.0 258.1,363.6 258.8,364.8 259.5,366.2 260.2,367.6 260.9,368.7 261.5,371.1 262.1,373.1 262.8,376.1 263.4,378.3 264.1,378.0 264.8,378.0 265.5,378.0 266.2,378.8 266.8,378.3 267.5,377.8 268.2,379.0 268.9,377.3 269.6,376.9 270.3,375.5 271.0,374.5 271.8,371.6 272.5,370.1 273.2,368.0 273.9,366.6 274.6,364.5 275.3,363.4 276.1,362.2 276.8,361.2 277.5,357.9 278.2,357.6 278.9,356.5 279.6,355.2 280.3,353.6 281.0,351.4 281.7,350.3 282.4,350.0 283.1,348.5 283.8,348.3 284.4,345.6 285.1,344.8 285.8,344.4 286.5,343.4 287.2,341.7 287.9,341.8 288.6,339.5 289.3,336.1 290.0,337.1 290.7,335.7 291.3,335.5 292.0,333.8 292.7,331.0 293.3,330.5 294.0,327.8 294.7,327.3 295.3,326.8 296.0,323.9 296.7,326.1 297.4,326.5 298.1,329.2 298.8,330.9 299.5,329.4 300.2,332.9 300.9,334.7 301.6,335.3 302.3,336.9 303.0,339.0 303.7,340.8 304.4,342.4 305.1,343.3 305.8,344.8 306.5,345.1 307.2,347.6 307.9,348.9 308.6,349.5 309.4,351.2 310.1,353.4 310.8,355.4 311.5,355.8 312.2,356.0 312.9,359.1 313.6,359.6 314.3,362.6 315.0,363.3 315.7,365.1 316.4,367.0 317.1,369.5 317.8,368.2 318.5,369.7 319.2,372.8 319.9,374.1 320.6,375.5 321.3,377.1 322.0,376.7 322.7,377.3 323.4,375.0 324.1,373.7 324.8,371.6 325.5,371.3 326.2,368.7 326.9,369.2 327.6,367.8 328.3,365.6 329.0,363.5 329.7,363.0 330.4,359.7 331.1,360.7 331.8,358.6 332.5,357.1 333.2,356.1 333.9,354.2 334.6,352.7 335.3,352.3 336.0,350.8 336.7,348.7 337.4,348.3 338.1,347.5 338.8,344.9 339.5,343.6 340.2,342.2 340.9,341.2 341.6,339.6 342.3,338.1 343.0,337.8 343.7,336.5 344.4,333.7 345.1,330.2 345.8,332.5 346.5,329.8 347.2,328.8 347.9,327.5 348.6,327.2 349.3,325.0 350.0,325.5 350.7,327.7 351.4,328.7 352.1,329.9 352.8,332.0 353.5,334.4 354.2,334.8 354.9,336.3 355.6,337.7 356.4,339.5 357.1,340.2 357.8,342.4 358.5,342.9 359.2,344.5 359.9,346.3 360.6,347.9 361.3,349.2 362.0,351.8 362.7,353.0 363.4,353.6 364.1,354.5 364.8,357.7 365.5,357.6 366.2,359.0 366.9,360.3 367.6,362.6 368.3,364.6 369.1,365.6 369.8,366.3 370.5,369.1 371.2,369.8 371.9,371.2 372.6,373.3 373.3,373.8 374.0,376.0 374.7,376.6 375.4,378.5 376.1,378.1 376.8,376.0 377.5,374.2 378.2,373.5 378.9,372.8 379.6,372.3 380.3,369.3 381.0,369.0 381.7,368.3 382.4,366.9 383.1,365.5 383.8,364.6 384.5,362.3 385.2,361.8 385.9,360.6 386.6,359.3 387.3,357.0 388.0,357.9 388.7,355.8 389.4,354.3 390.1,351.4 390.8,352.9 391.5,352.6 392.2,350.2 392.9,349.2 393.6,348.7 394.3,347.4 395.0,346.1 395.7,343.8 396.4,344.4 397.1,343.0 397.8,341.7 398.5,340.6 399.2,339.8 399.9,338.2 400.6,335.9 401.3,335.3 402.0,334.3 402.7,333.5 403.4,331.0 404.1,330.9 404.8,329.6 405.5,329.4 406.2,328.0 406.9,326.3 407.6,325.4 408.3,327.2 409.0,329.0 409.7,330.4 410.4,333.1 411.1,334.6 411.8,335.1 412.5,338.2 413.2,338.6 413.8,343.9 414.5,343.4 415.2,343.8 415.9,346.0 416.6,347.7 417.3,350.0 418.0,351.6 418.7,353.6 419.4,356.1 420.1,357.9 420.8,359.8 421.5,361.0 422.2,363.8 422.9,365.1 423.6,365.8 424.2,369.2 424.9,370.3 425.6,372.0 426.3,374.2 427.0,376.5 427.7,377.8 428.4,379.0 429.1,380.2 429.8,382.2 430.5,382.4 431.2,380.5 431.9,378.9 432.6,378.2 433.3,378.1 434.0,375.3 434.7,373.8 435.4,372.4 436.1,371.4 436.8,370.3 437.5,368.7 438.2,367.7 438.9,365.7 439.6,364.5 440.3,363.5 441.0,362.0 441.7,361.2 442.4,361.0 443.1,358.3 443.8,357.8 444.5,356.4 445.2,355.6 445.9,353.5 446.6,354.0 447.3,352.2 448.0,350.4 448.7,349.9 449.4,348.6 450.1,347.0 450.8,346.1 451.5,344.7 452.2,342.2 452.9,341.4 453.6,343.6 454.3,338.9 455.0,338.8 455.7,336.1 456.4,336.6 457.1,334.0 457.8,334.1 458.5,331.1 459.2,330.8 459.9,330.3 460.6,329.0 461.3,326.5 462.0,325.4 462.7,323.9 463.4,326.1 464.1,326.6 464.8,329.0 465.5,330.7 466.2,331.6 466.9,333.4 467.5,335.4 468.2,335.9 468.9,338.1 469.6,339.2 470.3,340.7 471.0,342.2 471.7,342.6 472.4,345.0 473.1,346.6 473.8,347.4 474.5,348.0 475.2,350.3 475.8,352.5 476.5,352.7 477.2,353.8 477.9,356.9 478.6,357.1 479.3,358.3 480.0,359.8 480.7,361.1 481.3,361.9 482.0,363.7 482.7,364.9 483.4,366.2 484.0,370.1 484.7,368.1 485.4,370.3 486.1,370.6 486.7,371.0 487.4,372.5 488.1,371.6 488.8,370.1 489.5,369.1 490.2,366.9 490.9,366.2 491.6,364.3 492.3,363.3 493.0,363.1 493.7,361.3 494.4,359.3 495.1,358.4 495.8,354.5 496.5,356.8 497.2,354.9 497.9,353.4 498.6,351.7 499.3,351.3 500.0,348.7 500.7,349.2 501.4,346.1 502.1,346.3 502.8,344.6 503.5,343.4 504.2,340.8 504.9,340.7 505.6,338.5 506.3,340.6 507.0,336.2 507.7,335.2 508.4,333.2 509.1,332.3 509.8,331.7 510.5,330.2 511.2,328.7 511.9,326.5 512.6,325.4 513.3,325.1 514.0,324.2 514.7,322.2 515.4,321.0 516.1,319.7 516.8,319.0 517.5,316.3 518.2,316.2 518.9,314.8 519.6,313.5 520.3,314.8 521.0,318.1 521.7,321.5 522.4,322.7 523.0,326.1 523.7,328.4 524.4,331.4 525.1,333.6 525.8,336.1 526.5,338.9 527.2,339.8 527.9,343.2 528.6,346.1 529.2,347.2 529.9,351.0 530.6,352.2 531.3,355.9 532.0,358.8 532.7,358.0 533.4,359.1 534.1,359.3 534.9,358.1 535.6,358.8 536.3,359.1 537.0,358.8 537.7,361.6 538.3,362.8 539.0,363.7 539.7,364.7 540.4,366.3 541.0,367.5 541.7,369.4 542.4,371.1 543.1,373.4 543.7,374.1 544.4,375.9 545.1,372.9 545.8,371.9 546.5,370.4 547.2,369.0 547.9,369.1 548.6,367.4 549.4,364.4 550.1,363.3 550.8,362.6 551.5,361.4 552.2,362.6 552.9,359.0 553.6,356.7 554.3,356.1 555.0,353.3 555.7,352.1 556.4,351.0 557.1,349.2 557.8,347.5 558.5,347.5 559.2,345.7 560.0,343.2 560.7,343.0 561.4,342.3 562.1,340.8 562.8,338.8 563.5,336.9 564.2,335.5 564.9,334.9 565.6,333.4 566.3,331.9 567.0,330.6 567.7,328.2 568.4,327.3 569.1,325.4 569.9,323.7 570.6,322.0 571.3,322.1 572.0,319.6 572.7,318.8 573.4,316.6 574.1,314.8 574.8,315.5 575.5,316.0 576.2,316.8 576.9,317.1 577.6,318.2 578.3,319.4 579.0,319.4 579.7,322.3 580.4,324.3 581.1,328.5 581.8,330.5 582.5,331.9 583.2,336.2 583.9,338.4 584.6,340.3 585.3,342.7 586.0,345.7 586.7,349.1 587.4,350.9 588.0,354.8 588.7,356.9 589.4,360.2 590.1,362.4 590.8,364.3 591.5,368.0 592.2,370.7 592.9,372.8 593.6,376.2 594.3,377.9 595.0,380.8 595.7,384.7 596.4,386.1 597.1,385.3 597.8,382.5 598.5,381.2 599.2,379.5 599.9,377.3 600.7,375.1 601.4,374.1 602.1,372.1 602.8,369.4 603.5,367.3 604.2,366.0 604.9,364.1 605.6,361.8 606.3,360.9 607.0,357.8 607.8,357.0 608.5,354.8 609.2,352.3 609.9,350.0 610.6,349.4 611.3,346.9 612.0,347.2 612.7,346.3 613.4,344.2 614.1,343.5 614.8,343.3 615.5,343.4 616.2,342.4 616.8,342.8 617.5,342.2 618.2,339.7 618.9,339.6 619.6,338.6 620.3,339.5 621.0,337.7 621.7,336.6 622.4,337.0 623.1,335.9 623.7,335.0 624.4,333.0 625.1,332.8 625.8,331.0 626.4,329.9 627.1,329.9 627.8,327.8 628.5,326.7 629.1,324.7 629.8,324.5 630.5,326.0 631.2,328.7 631.9,328.4 632.6,332.1 633.3,333.1 634.0,336.0 634.7,337.5 635.4,338.6 636.1,341.4 636.8,342.6 637.5,343.7 638.2,346.4 638.9,348.2 639.6,349.2 640.3,351.8 641.0,353.1 641.7,354.9 642.4,354.9 643.1,356.7 643.8,357.0 644.5,358.7 645.3,359.5 646.0,361.7 646.7,362.3 647.4,364.8 648.1,365.3 648.8,367.3 649.5,367.7 650.2,368.5 650.9,370.0 651.7,371.5 652.4,373.5 653.1,373.7 653.8,376.1 654.5,375.8 655.2,377.3 655.9,377.0 656.6,374.2 657.3,372.2 658.0,371.6 658.7,370.4 659.5,368.5 660.2,366.1 660.9,364.8 661.6,364.5 662.3,362.9 663.0,361.3 663.7,359.6 664.4,359.9 665.1,355.2 665.8,354.1 666.5,353.8 667.2,350.4 668.0,350.1 668.7,348.8 669.4,347.0 670.1,345.1 670.8,344.0 671.5,341.8 672.2,341.2 672.9,339.4 673.6,337.5 674.3,337.5 675.0,334.8 675.7,332.3 676.5,331.1 677.2,329.5 677.9,328.7 678.6,325.6 679.3,325.2 680.0,322.9 680.7,321.1 681.4,320.6 682.1,319.2 682.9,316.7 683.6,316.3 684.3,314.4 685.0,313.7 685.8,315.3 686.6,314.6 687.4,316.5 688.1,318.7 688.8,323.5 689.5,327.2 690.3,329.6 691.0,332.9 691.7,336.7 692.4,339.0 693.1,339.7 693.8,339.9 694.5,341.6 695.3,342.0 696.0,342.2 696.7,342.5 697.4,344.1 698.1,346.5 698.8,348.8 699.5,349.4 700.2,351.8 700.9,352.9 701.6,356.1 702.3,356.7 702.9,358.6 703.6,360.3 704.3,363.0 705.0,364.3 705.7,366.5 706.4,368.2 707.1,370.0 707.8,372.7 708.5,374.6 709.2,372.2 710.0,371.0 710.7,368.8 711.4,368.1 712.1,366.7 712.9,365.1 713.6,363.8 714.3,361.8 715.0,361.1 715.8,359.8 716.5,357.7 717.2,356.7 717.9,356.0 718.6,355.8 719.2,354.7 719.9,352.2 720.6,353.6 721.3,353.1 721.9,352.8 722.6,352.2 723.3,351.7 724.0,350.4 724.7,347.4 725.4,345.5 726.1,345.1 726.7,342.2 727.4,339.7 728.1,338.4 728.8,337.0 729.5,334.6 730.2,332.6 730.9,331.5 731.6,330.8 732.3,330.3 733.0,328.0 733.7,327.5 734.5,325.5 735.2,325.0 735.9,323.7 736.6,322.4 737.3,322.0 738.0,319.9 738.7,319.4 739.4,317.0 740.1,317.5 740.8,317.7 741.5,318.3 742.3,317.1 743.0,317.3 743.7,319.9 744.4,317.3 745.1,318.9 745.8,322.2 746.5,323.8 747.2,325.5 747.8,328.0 748.5,331.6 749.2,332.9 749.9,335.0 750.6,335.4 751.3,338.1 752.0,341.2 752.7,342.2 753.5,344.4 754.2,345.1 754.9,349.6 755.6,351.7 756.3,353.8 757.0,354.5 757.8,357.1 758.5,359.1 759.2,361.5 759.9,362.6 760.6,362.7 761.3,366.1 762.1,370.2 762.8,370.8 763.5,373.1 764.2,376.4 764.9,374.1 765.6,372.8 766.3,370.1 767.1,369.9 767.8,367.7 768.5,366.2 769.2,363.8 769.9,363.1 770.6,360.1 771.4,359.8 772.1,356.7 772.8,356.4 773.5,354.2"/>
  <polyline fill="none" stroke="#ee0000" stroke-width="1.6" shape-rendering="crispEdges" points="94.6,553.1 95.1,553.2 95.7,553.0 96.2,551.8 96.7,552.9 97.2,552.7 97.8,552.0 98.3,552.0 98.8,551.7 99.3,552.6 99.9,553.8 100.4,554.4 100.9,554.6 101.5,554.3 102.0,555.1 102.5,556.7 103.0,555.6 103.5,555.9 104.0,555.3 104.5,555.9 104.9,556.1 105.4,555.3 105.9,557.4 106.4,555.8 106.9,555.4 107.4,554.6 107.9,554.8 108.4,554.6 108.8,554.5 109.3,555.5 109.8,554.6 110.3,554.8 110.8,554.4 111.3,554.5 111.8,554.8 112.3,554.1 112.8,555.1 113.3,554.7 113.8,554.3 114.3,554.8 114.8,554.5 115.3,554.6 115.8,554.3 116.3,554.6 116.8,554.5 117.3,554.2 117.8,554.5 118.4,555.0 118.9,554.6 119.4,555.1 119.9,555.0 120.4,554.2 120.9,554.7 121.4,555.1 121.9,555.6 122.4,555.3 122.9,554.5 123.4,555.0 123.9,555.5 124.4,554.5 124.9,554.4 125.4,554.5 125.9,555.2 126.4,555.1 126.9,555.3 127.4,554.7 127.9,555.6 128.4,555.5 128.9,554.6 129.4,555.6 129.9,555.1 130.4,555.2 130.9,554.5 131.4,554.9 131.9,554.5 132.4,555.3 132.9,555.7 133.4,555.9 134.0,555.8 134.5,554.8 135.0,555.2 135.5,555.0 136.0,555.0 136.5,555.5 137.0,555.0 137.5,555.9 138.0,555.9 138.5,555.8 139.0,555.1 139.5,554.8 140.0,554.9 140.5,555.9 141.0,554.8 141.5,555.3 142.0,556.0 142.5,556.0 143.0,555.4 143.5,555.0 144.0,554.8 144.5,555.4 145.0,555.5 145.5,555.4 146.0,555.8 146.5,555.6 147.0,555.7 147.5,555.0 148.0,554.7 148.5,554.3 149.0,555.2 149.5,554.6 150.0,555.3 150.5,555.0 151.0,555.4 151.5,554.4 152.0,554.7 152.5,554.3 153.0,554.1 153.5,554.6 154.0,554.5 154.5,554.3 155.0,554.1 155.5,553.9 156.0,554.7 156.5,554.2 157.0,554.4 157.5,554.9 158.0,554.2 158.5,554.3 159.0,554.6 159.5,554.8 160.0,554.4 160.5,553.9 161.0,553.5 161.5,553.9 162.0,556.1 162.5,551.3 163.0,557.1 163.5,553.7 164.0,553.4 164.5,554.5 165.0,553.7 165.5,554.7 166.0,554.5 166.5,552.0 167.0,553.6 167.5,553.6 168.0,553.9 168.5,553.6 169.0,556.4 169.5,553.8 170.0,553.2 170.5,553.3 171.0,554.1 171.5,553.9 172.0,553.8 172.5,554.1 173.0,553.8 173.5,554.1 174.0,553.9 174.5,552.8 175.0,553.6 175.5,553.4 176.0,552.9 176.5,553.9 177.0,553.4 177.5,550.9 178.0,552.7 178.6,552.1 179.1,552.1 179.6,551.4 180.1,551.7 180.6,550.9 181.2,551.6 181.7,551.4 182.2,551.2 182.7,550.5 183.2,549.0 183.7,550.5 184.2,548.5 184.6,551.4 185.1,551.2 185.6,550.8 186.1,551.8 186.6,551.4 187.1,552.3 187.6,551.5 188.1,552.1 188.6,552.6 189.1,549.1 189.5,551.8 190.0,552.2 190.5,551.9 191.0,552.7 191.5,552.7 192.0,551.9 192.5,552.1 193.0,552.9 193.5,553.4 194.0,552.8 194.5,552.5 195.0,552.7 195.5,554.1 196.0,553.2 196.5,554.4 197.0,554.3 197.5,554.2 198.0,553.8 198.5,554.5 199.0,554.3 199.5,555.0 200.0,555.1 200.5,555.3 201.0,555.1 201.5,555.5 202.0,552.2 202.5,555.0 203.0,556.0 203.5,555.2 204.0,555.1 204.5,555.9 205.0,555.3 205.5,558.0 206.0,555.8 206.5,555.4 207.0,555.7 207.5,553.0 208.0,555.0 208.5,552.5 209.0,555.5 209.5,555.9 210.0,555.5 210.5,555.5 211.0,554.7 211.5,554.5 212.0,554.6 212.5,555.8 213.0,554.9 213.5,554.8 214.0,555.4 214.5,554.7 215.0,555.7 215.5,555.0 216.0,556.9 216.5,557.1 217.0,555.7 217.5,554.7 218.0,554.5 218.5,555.3 219.0,555.0 219.5,554.2 220.0,554.6 220.5,555.0 221.0,553.9 221.5,554.4 222.0,553.6 222.6,554.2 223.1,554.3 223.6,552.9 224.1,553.5 224.6,553.0 225.1,553.4 225.6,554.8 226.1,552.9 226.6,553.2 227.1,551.8 227.6,552.5 228.1,551.8 228.7,551.9 229.2,551.9 229.7,552.1 230.2,551.0 230.7,550.8 231.2,551.4 231.7,553.8 232.2,550.7 232.7,550.2 233.2,551.6 233.7,550.4 234.2,551.4 234.7,553.0 235.1,551.0 235.6,551.2 236.1,550.8 236.6,551.1 237.1,548.7 237.6,548.5 238.1,552.1 238.6,551.4 239.1,551.1 239.6,551.4 240.1,551.8 240.6,552.2 241.0,552.8 241.5,552.3 242.0,551.7 242.5,552.2 243.0,552.1 243.5,552.1 244.0,549.5 244.5,552.4 245.0,552.4 245.5,552.5 246.0,551.4 246.5,551.2 247.0,551.7 247.4,551.4 247.9,551.1 248.4,551.4 248.9,551.5 249.4,550.9 249.9,551.6 250.4,551.3 250.9,550.6 251.4,551.1 251.9,549.9 252.4,550.0 252.9,551.0 253.4,550.8 253.9,550.6 254.4,550.4 254.9,547.5 255.4,548.0 255.9,550.2 256.4,550.0 256.9,550.1 257.4,550.2 258.0,550.3 258.5,549.1 259.0,549.5 259.5,548.9 260.0,549.0 260.5,548.7 261.0,549.5 261.5,549.9 262.0,547.3 262.5,548.5 263.0,549.3 263.5,549.5 264.0,549.4 264.5,549.0 265.0,548.8 265.5,548.5 266.0,549.0 266.5,548.3 267.0,548.6 267.5,549.7 268.0,549.4 268.5,548.8 269.0,549.5 269.5,549.4 270.0,549.2 270.5,549.4 271.0,550.4 271.5,550.3 272.0,552.6 272.5,550.7 273.0,551.1 273.5,551.1 274.0,551.9 274.5,549.1 275.0,552.1 275.5,552.8 276.0,552.8 276.5,553.8 277.0,553.1 277.5,553.5 278.0,553.5 278.5,554.1 279.0,554.8 279.5,554.5 280.0,552.5 280.5,554.0 281.0,554.5 281.5,554.9 282.0,554.6 282.5,554.5 283.0,555.1 283.5,555.7 284.0,555.0 284.5,554.9 285.0,555.0 285.5,556.2 286.0,555.3 286.5,558.2 287.0,557.8 287.5,556.6 288.0,555.4 288.5,556.2 289.0,555.2 289.5,555.3 290.0,556.0 290.5,555.0 291.0,555.4 291.5,555.1 292.0,554.6 292.5,557.2 293.0,555.2 293.5,554.7 294.0,554.9 294.5,554.0 295.0,554.4 295.5,553.4 296.0,553.1 296.5,553.9 297.0,556.2 297.5,553.8 298.0,552.4 298.5,552.5 299.0,552.1 299.5,553.4 300.0,553.1 300.5,551.9 301.0,552.9 301.5,552.9 302.0,552.5 302.5,552.3 303.0,552.0 303.5,552.5 304.0,551.9 304.5,551.2 305.0,551.3 305.5,551.4 306.0,554.6 306.5,551.1 307.0,551.1 307.5,551.1 308.0,550.7 308.5,553.6 309.0,550.4 309.5,550.5 310.0,551.3 310.5,550.6 311.0,553.2 311.5,548.8 312.0,551.0 312.5,550.0 313.0,550.2 313.5,550.1 314.0,550.8 314.5,549.9 315.0,550.1 315.5,550.7 316.0,550.0 316.5,550.7 317.0,551.8 317.5,549.4 318.0,547.7 318.5,549.7 319.0,550.0 319.5,549.1 320.0,549.0 320.5,551.9 321.0,549.5 321.5,549.0 322.0,549.5 322.5,549.5 323.0,549.2 323.5,549.7 324.0,549.4 324.5,548.5 325.0,549.2 325.5,549.0 326.0,548.8 326.5,546.3 327.0,548.9 327.5,546.2 328.0,548.8 328.6,549.7 329.1,550.9 329.6,550.5 330.1,553.7 330.6,552.0 331.2,552.4 331.7,553.8 332.2,553.7 332.7,555.0 333.2,550.4 333.7,553.0 334.1,552.8 334.6,551.8 335.1,552.1 335.6,552.0 336.1,552.0 336.6,552.1 337.1,554.3 337.6,551.3 338.0,551.4 338.5,551.9 339.0,550.8 339.5,550.7 340.0,550.5 340.5,550.4 341.0,550.6 341.5,550.7 342.0,550.1 342.5,550.1 343.0,550.8 343.5,549.9 344.0,549.7 344.5,550.3 345.0,549.6 345.4,551.8 345.9,549.0 346.4,549.3 346.9,549.2 347.4,548.9 347.9,549.4 348.4,548.2 348.9,548.5 349.4,548.2 349.9,548.6 350.4,547.8 350.9,548.0 351.4,548.3 351.9,550.7 352.4,547.6 352.9,548.3 353.4,548.4 353.9,547.5 354.4,547.5 354.9,545.0 355.4,547.1 355.9,547.9 356.4,547.5 356.9,547.3 357.4,546.6 358.0,546.9 358.5,547.2 359.0,547.7 359.5,546.5 360.0,546.4 360.5,546.3 361.0,546.9 361.5,546.4 362.0,547.3 362.5,546.2 363.0,547.1 363.5,546.6 364.0,546.1 364.5,546.4 365.0,545.6 365.5,546.3 366.0,547.0 366.5,546.4 367.0,546.8 367.5,546.5 368.0,546.7 368.5,546.2 369.0,547.0 369.5,547.5 370.0,546.4 370.5,546.8 371.0,547.4 371.5,547.3 372.0,547.2 372.5,544.4 373.0,549.3 373.5,547.4 374.0,547.8 374.5,547.0 375.0,547.9 375.5,547.4 376.0,548.2 376.5,547.8 377.0,545.5 377.5,547.4 378.0,548.0 378.5,548.4 379.0,547.8 379.5,548.1 380.0,548.4 380.5,547.8 381.0,547.7 381.5,548.9 382.0,548.0 382.5,548.7 383.0,548.4 383.5,549.4 384.0,549.5 384.5,548.9 385.0,548.8 385.5,548.6 386.0,549.5 386.5,549.5 387.0,549.3 387.5,549.5 388.0,550.2 388.5,552.6 389.0,552.4 389.5,546.8 390.0,549.4 390.5,550.0 391.0,550.1 391.5,549.5 392.0,550.6 392.5,550.7 393.0,550.6 393.5,553.0 394.0,551.1 394.5,549.8 395.0,549.9 395.5,550.0 396.0,549.9 396.5,550.4 397.0,550.5 397.5,551.4 398.0,551.1 398.5,550.6 399.0,553.1 399.5,550.7 400.0,550.9 400.5,550.3 401.0,550.2 401.5,551.0 402.0,551.1 402.5,551.0 403.0,550.8 403.5,550.5 404.0,548.4 404.5,550.2 405.0,550.5 405.5,549.8 406.0,549.6 406.5,550.1 407.0,549.5 407.5,550.8 408.0,549.9 408.5,549.5 409.0,551.9 409.5,550.4 410.0,550.4 410.5,550.6 411.0,550.0 411.5,549.8 412.0,550.3 412.5,549.5 413.0,549.2 413.5,549.3 414.0,549.8 414.5,549.9 415.0,549.3 415.5,549.8 416.0,549.6 416.5,549.3 417.0,549.4 417.5,551.8 418.0,548.7 418.5,548.9 419.0,549.0 419.5,548.9 420.0,549.3 420.5,548.1 421.0,548.5 421.5,548.7 422.0,549.2 422.5,548.2 423.0,548.1 423.5,550.8 424.0,548.5 424.5,548.3 425.0,547.8 425.5,548.5 426.0,547.9 426.5,547.9 427.0,547.7 427.5,548.0 428.0,549.8 428.5,548.4 429.0,547.8 429.5,548.1 430.0,548.0 430.5,547.5 431.0,548.6 431.5,547.7 432.0,548.6 432.5,551.2 433.0,548.3 433.5,548.7 433.9,548.8 434.4,548.8 434.9,548.3 435.4,549.7 435.9,548.5 436.4,548.8 436.9,549.0 437.4,548.8 437.9,549.3 438.4,549.0 438.9,549.6 439.4,549.2 439.9,549.0 440.4,549.5 440.9,549.3 441.4,549.8 441.9,549.6 442.4,549.3 442.9,549.9 443.4,547.4 443.9,550.0 444.4,549.4 444.9,549.1 445.4,548.9 445.9,549.2 446.4,548.9 447.0,550.2 447.5,549.1 448.0,548.8 448.5,549.0 449.0,549.1 449.5,548.8 450.0,550.0 450.5,549.9 451.0,549.7 451.5,548.8 452.0,548.6 452.5,549.5 453.0,548.5 453.5,549.7 454.0,549.5 454.5,549.8 455.0,549.0 455.5,551.4 456.0,548.5 456.5,549.5 457.0,548.9 457.5,546.9 458.0,549.3 458.5,549.0 459.0,549.4 459.5,549.6 460.0,546.2 460.5,551.3 461.0,548.6 461.5,549.0 462.0,548.8 462.5,548.7 463.0,548.7 463.5,549.5 464.0,549.5 464.5,549.4 465.0,549.2 465.6,549.8 466.1,550.0 466.6,550.1 467.1,550.6 467.6,546.9 468.1,550.3 468.6,550.0 469.1,550.3 469.7,550.6 470.2,550.4 470.7,550.2 471.2,553.8 471.7,550.4 472.2,550.4 472.7,550.4 473.2,550.4 473.7,550.5 474.2,550.3 474.6,551.3 475.1,550.5 475.6,550.0 476.1,551.3 476.6,551.2 477.1,553.7 477.6,553.2 478.1,550.3 478.6,550.3 479.1,550.7 479.5,551.1 480.0,550.8 480.5,550.1 481.0,548.1 481.5,550.3 482.0,550.9 482.5,551.5 483.0,551.6 483.5,551.9 484.0,553.2 484.5,552.3 485.0,552.7 485.5,550.4 486.0,551.9 486.5,552.7 487.0,549.4 487.6,552.8 488.1,551.8 488.6,551.5 489.1,552.0 489.6,552.0 490.1,551.7 490.6,551.3 491.1,552.2 491.6,551.4 492.1,549.2 492.6,551.1 493.1,551.0 493.7,550.9 494.2,553.6 494.7,551.7 495.2,550.8 495.7,548.3 496.2,551.3 496.7,550.5 497.2,551.5 497.7,551.6 498.2,551.1 498.7,551.1 499.2,550.5 499.7,551.8 500.2,551.1 500.7,552.0 501.1,551.2 501.6,551.5 502.1,551.5 502.6,552.2 503.1,551.6 503.6,551.3 504.1,552.0 504.6,552.3 505.1,551.9 505.6,552.7 506.1,552.2 506.6,551.6 507.1,552.7 507.6,551.9 508.1,551.9 508.6,552.1 509.0,552.9 509.5,552.6 510.0,553.1 510.5,553.0 511.0,555.8 511.5,553.0 512.0,553.1 512.5,553.8 513.0,553.0 513.5,553.1 514.0,552.7 514.5,553.5 515.0,553.4 515.5,552.8 516.0,551.7 516.6,551.8 517.1,552.6 517.6,551.7 518.1,552.1 518.6,551.2 519.1,552.1 519.6,551.4 520.1,551.1 520.6,551.0 521.1,553.6 521.6,550.9 522.1,551.6 522.6,553.9 523.1,551.2 523.6,550.7 524.1,551.3 524.6,551.3 525.1,550.7 525.6,551.0 526.0,551.3 526.5,550.3 527.0,551.3 527.5,550.1 528.0,551.2 528.5,550.7 529.0,550.8 529.5,551.3 530.0,550.4 530.5,550.3 531.0,550.1 531.5,550.2 532.0,550.1 532.5,549.9 533.0,550.7 533.5,549.8 534.0,549.9 534.5,549.2 535.0,549.4 535.5,549.9 536.0,549.0 536.4,550.0 536.9,549.4 537.4,548.4 537.9,549.1 538.4,549.2 538.9,549.0 539.4,548.8 539.9,548.9 540.4,548.4 540.9,548.8 541.4,548.3 541.9,549.4 542.3,549.7 542.8,549.4 543.3,549.5 543.8,549.8 544.3,550.5 544.8,550.6 545.2,551.4 545.7,550.7 546.2,551.5 546.7,552.3 547.2,552.3 547.7,551.3 548.2,551.7 548.7,551.3 549.2,551.3 549.7,551.1 550.2,551.5 550.7,551.4 551.1,552.4 551.6,551.9 552.1,552.3 552.6,551.7 553.1,551.0 553.6,551.8 554.1,548.7 554.6,551.1 555.1,551.2 555.6,551.8 556.1,550.8 556.6,551.9 557.1,552.2 557.6,551.8 558.1,551.6 558.6,551.0 559.0,551.6 559.5,551.5 560.0,551.6 560.5,551.2 561.0,551.6 561.5,550.7 562.0,551.1 562.5,551.5 563.0,551.7 563.5,551.1 564.0,551.6 564.5,549.4 565.0,550.9 565.5,551.4 566.0,551.2 566.4,551.6 566.9,551.2 567.4,550.9 567.9,550.9 568.4,551.0 568.9,552.2 569.4,551.9 569.9,551.2 570.4,552.3 570.9,552.2 571.4,551.9 571.9,552.0 572.4,551.9 572.8,551.9 573.3,551.9 573.8,551.4 574.3,553.7 574.8,552.2 575.3,551.9 575.8,551.3 576.3,551.4 576.8,551.1 577.3,553.5 577.8,552.0 578.3,551.0 578.8,549.4 579.3,551.5 579.8,551.5 580.4,550.6 580.9,551.4 581.4,550.7 581.9,551.5 582.4,550.4 582.9,551.4 583.4,550.2 583.9,550.4 584.4,550.8 584.9,550.6 585.4,550.0 585.9,550.2 586.4,549.7 586.9,549.8 587.4,549.5 587.9,550.6 588.5,550.3 589.0,550.0 589.5,549.6 590.0,549.3 590.5,549.1 591.0,549.5 591.5,549.0 592.0,548.7 592.5,548.6 593.0,548.8 593.5,548.7 594.0,549.6 594.5,548.5 595.0,548.8 595.5,548.7 596.0,548.4 596.5,548.4 597.0,548.8 597.5,547.8 598.0,548.3 598.5,551.0 599.0,548.6 599.5,548.0 600.0,548.6 600.5,547.8 601.0,548.3 601.5,550.8 602.0,548.3 602.5,548.2 603.0,547.6 603.5,548.2 604.0,547.6 604.5,547.7 605.0,547.5 605.5,548.3 606.0,546.2 606.5,547.6 607.0,547.6 607.5,548.4 608.0,548.5 608.5,548.0 609.0,548.2 609.5,549.0 610.0,548.9 610.5,547.9 611.0,548.6 611.5,548.2 612.0,548.5 612.5,548.6 613.0,548.9 613.5,548.9 614.0,549.0 614.5,549.2 615.0,550.7 615.5,550.6 616.0,550.9 616.6,550.7 617.1,551.5 617.6,551.8 618.1,552.4 618.6,552.2 619.1,553.0 619.6,553.3 620.1,553.4 620.6,553.0 621.1,553.2 621.6,552.7 622.1,553.7 622.6,553.3 623.1,552.9 623.6,552.5 624.1,551.0 624.6,552.4 625.1,555.4 625.6,553.4 626.1,553.0 626.6,553.3 627.0,553.1 627.5,552.0 628.0,552.8 628.5,551.9 629.0,553.0 629.5,551.7 630.0,553.0 630.5,552.5 631.0,552.4 631.5,549.6 632.0,552.4 632.5,551.4 633.0,551.4 633.5,551.6 634.0,551.5 634.5,552.4 635.0,551.9 635.5,551.4 636.0,551.7 636.5,551.3 637.0,554.9 637.4,551.8 637.9,555.2 638.4,551.7 638.9,552.2 639.4,552.6 639.9,551.9 640.4,551.8 640.9,551.9 641.4,552.8 641.9,554.8 642.4,552.4 642.9,552.7 643.3,552.0 643.8,552.1 644.3,553.0 644.8,549.4 645.3,552.8 645.8,552.8 646.3,551.9 646.8,551.9 647.3,553.1 647.8,552.1 648.3,553.0 648.8,552.2 649.3,552.0 649.8,552.4 650.3,552.0 650.8,552.2 651.3,553.1 651.8,552.2 652.3,552.3 652.9,552.4 653.4,552.9 653.9,552.9 654.4,552.0 654.9,555.6 655.4,553.1 655.9,549.4 656.4,554.4 657.0,552.4 657.5,552.5 658.0,554.9 658.5,552.8 659.0,552.1 659.5,552.5 660.0,552.8 660.5,552.8 661.0,551.8 661.5,552.7 662.0,552.0 662.5,551.9 663.0,552.8 663.5,552.7 664.0,552.7 664.5,551.5 665.0,551.4 665.5,551.9 666.0,551.8 666.5,552.4 667.0,551.3 667.5,551.8 668.0,552.3 668.5,551.7 669.0,551.5 669.5,551.2 670.0,548.9 670.5,552.0 671.0,551.3 671.5,551.4 672.0,551.2 672.5,551.7 673.0,551.4 673.5,550.6 674.0,550.7 674.5,551.6 675.0,551.3 675.5,548.2 676.0,550.3 676.5,551.0 677.0,550.7 677.5,550.5 678.0,551.5 678.5,551.6 679.0,550.6 679.5,551.4 680.0,551.2 680.5,550.7 681.0,550.6 681.5,550.8 682.0,551.6 682.5,550.8 683.0,553.9 683.5,551.0 684.0,551.4 684.5,550.7 685.0,552.0 685.5,551.1 686.0,550.9 686.5,551.3 687.0,553.7 687.5,551.1 688.0,552.1 688.5,551.0 689.0,551.9 689.5,551.4 690.0,551.0 690.5,551.5 691.0,554.5 691.5,552.1 692.0,551.4 692.5,552.5 693.0,551.6 693.5,552.8 694.0,552.7 694.5,552.9 695.0,552.8 695.5,553.0 696.0,553.9 696.5,553.5 697.0,553.7 697.5,554.1 698.0,553.6 698.5,556.7 699.0,555.0 699.5,554.6 700.0,555.0 700.5,555.7 701.0,555.5 701.5,555.4 702.0,555.3 702.5,556.3 703.0,556.2 703.5,555.3 704.0,556.0 704.5,555.6 705.0,555.8 705.5,555.1 706.0,555.4 706.5,555.2 707.0,555.3 707.5,555.5 708.0,555.4 708.5,557.7 709.0,555.5 709.4,554.3 709.9,554.2 710.4,554.8 710.9,555.2 711.4,554.9 711.9,554.9 712.4,554.1 712.9,554.4 713.4,553.9 713.9,554.2 714.4,554.6 714.9,554.2 715.4,553.6 715.9,552.2 716.4,553.7 716.9,554.1 717.4,554.4 717.9,553.9 718.4,554.0 718.9,555.2 719.4,555.2 719.9,554.6 720.4,554.3 720.9,557.6 721.4,555.1 721.9,554.3 722.4,554.4 723.0,555.2 723.5,555.1 724.0,555.5 724.5,555.3 725.0,553.2 725.5,555.5 726.0,555.2 726.5,552.5 727.0,555.5 727.5,558.6 728.0,555.2 728.5,556.5 729.0,556.5 729.5,555.6 730.0,556.0 730.5,556.0 731.0,556.1 731.5,553.4 732.0,555.6 732.5,555.2 733.0,555.3 733.5,557.5 734.0,555.6 734.5,554.3 735.0,557.9 735.5,555.2 736.0,554.3 736.5,553.7 737.0,554.1 737.5,554.5 738.0,553.4 738.5,553.7 739.0,553.2 739.5,554.3 740.0,553.9 740.5,552.7 741.0,555.2 741.5,552.6 742.0,553.7 742.5,552.6 743.0,555.0 743.5,552.6 744.0,553.3 744.5,553.2 745.0,551.3 745.5,552.7 746.0,552.6 746.5,553.0 747.0,553.0 747.5,553.3 748.0,553.4 748.5,552.9 749.0,553.5 749.5,553.3 750.0,553.1 750.5,553.2 751.0,553.2 751.5,553.1 752.0,553.8 752.5,553.2 753.0,553.6 753.5,553.7 754.0,554.3 754.5,554.0 755.0,556.5 755.5,554.4 756.0,554.4 756.5,554.3 757.0,553.9 757.5,554.4 758.0,553.3 758.5,553.9 759.0,554.1 759.6,553.8 760.1,553.3 760.6,553.6 761.1,553.7 761.6,553.0 762.1,552.9 762.6,553.9 763.1,553.8 763.6,553.6 764.1,553.0 764.6,552.8 765.1,550.7 765.6,552.9 766.1,552.4 766.6,553.2 767.1,552.8 767.7,553.3 768.2,552.4 768.7,553.3 769.2,552.8 769.7,552.4 770.2,552.3 770.7,552.5 771.2,553.2 771.7,554.4 772.1,552.6 772.6,552.5 773.0,552.0"/>
</svg>

<!-- ========== Taskbar ========== -->
<div class="a" style="left:0;top:1019px;width:1680px;height:31px;background:#D4D0C8;box-shadow:inset 0 1px #D4D0C8,inset 0 2px #fff"></div>
<div class="a btn" style="left:2px;top:1023px;width:62px;height:22px"></div>
<svg class="a" style="left:5px;top:1026px" width="17" height="16"><path d="M2 3 Q4.5 1.5 7.5 3 V8 Q4.5 6.5 2 8 Z" fill="#f05020"/><path d="M8.5 3 Q11.5 4.5 15 3 V8 Q11.5 9.5 8.5 8 Z" fill="#30b030"/><path d="M2 9 Q4.5 7.5 7.5 9 V14 Q4.5 12.5 2 14 Z" fill="#2060e0"/><path d="M8.5 9 Q11.5 10.5 15 9 V14 Q11.5 15.5 8.5 14 Z" fill="#f0c020"/></svg>
<div class="a" style="left:22px;top:1024px;font-size:13px;font-weight:bold;line-height:20px;white-space:nowrap;width:56px;overflow:hidden;transform:scaleX(0.73);transform-origin:0 0">スタート</div>
<!-- quick launch -->
<svg class="a" style="left:71px;top:1027px" width="18" height="18"><circle cx="9" cy="9.5" r="7" fill="#2a7de0"/><ellipse cx="9" cy="9.5" rx="3.5" ry="2.6" fill="#cfe4ff"/><path d="M5 9.5 H13" stroke="#2a7de0" stroke-width="1.6"/><path d="M2 6 Q9 0 16 4" stroke="#f0b000" stroke-width="1.5" fill="none"/></svg>
<svg class="a" style="left:94px;top:1027px" width="18" height="18"><rect x="2" y="2" width="14" height="14" rx="3" fill="#3a8ae8" stroke="#1a4aa0"/><rect x="5" y="5" width="8" height="8" fill="#e8f2ff"/><path d="M6 12 L12 6" stroke="#1a4aa0" stroke-width="1.5"/></svg>
<svg class="a" style="left:117px;top:1027px" width="18" height="18"><path d="M1 5 H7 L8 6 H16 V15 H1 Z" fill="#f0d060" stroke="#a08020"/><circle cx="10" cy="10" r="3.5" fill="#cfe8ff" stroke="#5070a0"/></svg>
<!-- task buttons -->
<div class="a btn" style="left:142px;top:1023px;width:160px;height:22px"></div>
<div class="a" style="left:147px;top:1028px;width:16px;height:12px;background:#101828;border:1px solid #4060a0;color:#fff;font-size:7px;line-height:10px;font-weight:bold;text-align:center">C:\</div>
<div class="a" style="left:166px;top:1025px;font-size:12px;line-height:18px;white-space:nowrap;width:158px;overflow:hidden;transform:scaleX(0.84);transform-origin:0 0">transfile.cmd へのショート...</div>
<div class="a btn" style="left:305px;top:1023px;width:159px;height:22px"></div>
<svg class="a" style="left:308px;top:1026px" width="16" height="16"><rect x="2" y="2" width="12" height="12" fill="#e8e0c0" stroke="#444"/><path d="M3 13 L8 3 L13 13" stroke="#d02020" fill="none"/><path d="M4 6 H12" stroke="#2050c0"/></svg>
<div class="a" style="left:329px;top:1025px;font-size:12px;line-height:18px;white-space:nowrap;transform:scaleX(0.92);transform-origin:0 0">PhotoImpression 2000</div>
<div class="a" style="left:468px;top:1023px;width:159px;height:22px;background-color:#EAE8E4;background-image:repeating-conic-gradient(#fff 0 25%,#D4D0C8 0 50%);background-size:2px 2px;box-shadow:inset 1px 1px #404040,inset -1px -1px #fff,inset 2px 2px #808080"></div>
<div class="a" style="left:472px;top:1027px;width:16px;height:16px"><svg width="16" height="16" viewBox="0 0 16 16"><rect x="0.5" y="0.5" width="15" height="15" fill="#fff" stroke="#222"/><rect x="1" y="1" width="14" height="6" fill="#f4f0ff"/><path d="M2 4 Q5 2 8 4 T14 3" stroke="#c080c0" fill="none"/><path d="M2 6 L14 6" stroke="#60c060"/><rect x="1" y="8" width="14" height="7" fill="#303030"/><rect x="2" y="10" width="3" height="4" fill="#e00000"/><rect x="6" y="10" width="3" height="4" fill="#0000e0"/><rect x="10" y="10" width="4" height="4" fill="#00d000"/></svg></div>
<div class="a" style="left:492px;top:1026px;font-size:12px;font-weight:bold;line-height:18px;white-space:nowrap;width:150px;overflow:hidden;transform:scaleX(0.875);transform-origin:0 0">ソフトサーモ　E830</div>
<!-- tray -->
<svg class="a" style="left:1547px;top:1029px" width="14" height="15"><path d="M4 3 Q5 1 6 3 Q7 5 8 3 Q9 1 10 3 Q11 5 12 3" stroke="#000" fill="none"/><rect x="1" y="5.5" width="12" height="8" fill="#fff" stroke="#000"/><path d="M3 8 H11 M3 10 H11" stroke="#000" stroke-dasharray="1 1"/></svg>
<div class="a thin-sunken" style="left:1564px;top:1024px;width:114px;height:24px"></div>
<svg class="a" style="left:1567px;top:1027px" width="70" height="18"><path d="M7 1 L13 3.5 V9 Q13 14 7 17 Q1 14 1 9 V3.5 Z" fill="#f0e020" stroke="#6a6aa0"/><path d="M7 5 V10 M7 12 V13.5" stroke="#000" stroke-width="1.6"/><path d="M26 1 L32 3.5 V9 Q32 14 26 17 Q20 14 20 9 V3.5 Z" fill="#c01830" stroke="#6a6aa0"/><path d="M23.5 6.5 L28.5 11.5 M28.5 6.5 L23.5 11.5" stroke="#fff" stroke-width="1.8"/><path d="M38 2 Q42 0 45 4 L43 8 Q40 6 38 7 Z" fill="#30b030"/><rect x="41" y="8" width="9" height="7" fill="#8090a0" stroke="#404850" transform="rotate(-25 45 11)"/><path d="M62 3 L64 8 L69 8 L65 11 L66.5 16 L62 13 L57.5 16 L59 11 L55 8 L60 8 Z" fill="#f0d040" stroke="#c0a020" stroke-width="0.6"/></svg>
<div class="a" style="left:1645px;top:1027px;font-size:12px;line-height:16px">2:49</div>

</body></html>
